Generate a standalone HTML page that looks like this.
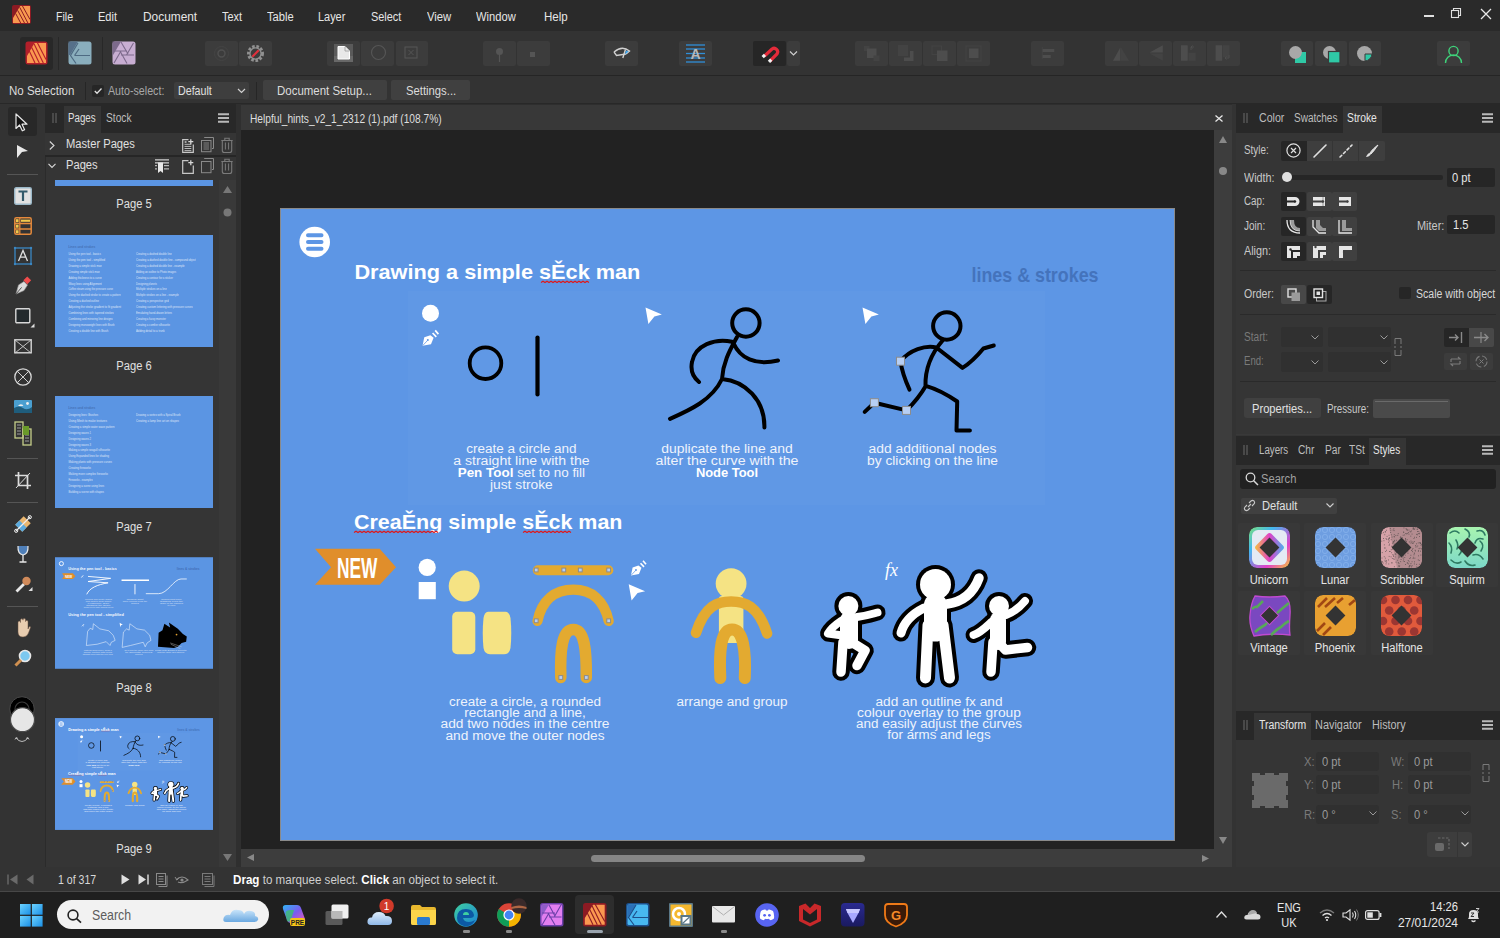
<!DOCTYPE html>
<html><head><meta charset="utf-8">
<style>
*{margin:0;padding:0;box-sizing:border-box}
html,body{width:1500px;height:938px;overflow:hidden;background:#333;font-family:"Liberation Sans",sans-serif;color:#ddd}
.a{position:absolute}
.t{position:absolute;white-space:nowrap;line-height:1}
svg{position:absolute;overflow:visible}
</style></head><body>
<div class="a" style="left:0px;top:0px;width:1500px;height:31px;background:#2a2a2a;"></div>
<div class="a" style="left:0px;top:31px;width:1500px;height:44px;background:#333333;"></div>
<div class="a" style="left:0px;top:75px;width:1500px;height:1px;background:#252525;"></div>
<div class="a" style="left:0px;top:76px;width:1500px;height:27px;background:#333333;"></div>
<div class="a" style="left:0px;top:103px;width:1500px;height:1px;background:#282828;"></div>
<div class="a" style="left:0px;top:104px;width:1500px;height:763px;background:#2e2e2e;"></div>
<div class="a" style="left:0px;top:104px;width:45px;height:763px;background:#333333;"></div>
<div class="a" style="left:45px;top:104px;width:191px;height:763px;background:#353535;"></div>
<div class="a" style="left:241px;top:105px;width:991px;height:25px;background:#383838;"></div>
<div class="a" style="left:241px;top:130px;width:973px;height:719px;background:#222222;"></div>
<div class="a" style="left:1214px;top:130px;width:18px;height:737px;background:#3d3d3d;"></div>
<div class="a" style="left:241px;top:849px;width:973px;height:18px;background:#3d3d3d;"></div>
<div class="a" style="left:1236px;top:104px;width:264px;height:763px;background:#353535;"></div>
<div class="a" style="left:0px;top:867px;width:1500px;height:24px;background:#333333;"></div>
<div class="a" style="left:0px;top:891px;width:1500px;height:1px;background:#474747;"></div>
<div class="a" style="left:0px;top:892px;width:1500px;height:46px;background:#1f1f1f;"></div>
<svg style="left:12px;top:5px;" width="19" height="19" viewBox="0 0 19 19"><rect x="0" y="0" width="19" height="19" rx="2" fill="#8c1a23"/>
<polygon points="8.2,1 18,1 18,18 1,18 1,13.1" fill="#f8984f"/>
<g stroke="#8c1a23" stroke-width="1" fill="none">
<line x1="3.6" y1="8.4" x2="8.7" y2="18"/><line x1="5.6" y1="5.3" x2="12.5" y2="18"/>
<line x1="7.7" y1="2.3" x2="15.9" y2="18"/><line x1="10.2" y1="0.5" x2="18" y2="14.5"/></g></svg>
<div class="t" style="left:55.7px;transform:scaleX(0.88);transform-origin:left;top:11px;font-size:12px;color:#e6e6e6;font-weight:400;">File</div>
<div class="t" style="left:98.3px;transform:scaleX(0.92);transform-origin:left;top:11px;font-size:12px;color:#e6e6e6;font-weight:400;">Edit</div>
<div class="t" style="left:142.7px;transform:scaleX(0.99);transform-origin:left;top:11px;font-size:12px;color:#e6e6e6;font-weight:400;">Document</div>
<div class="t" style="left:221.7px;transform:scaleX(0.91);transform-origin:left;top:11px;font-size:12px;color:#e6e6e6;font-weight:400;">Text</div>
<div class="t" style="left:266.7px;transform:scaleX(0.93);transform-origin:left;top:11px;font-size:12px;color:#e6e6e6;font-weight:400;">Table</div>
<div class="t" style="left:318.3px;transform:scaleX(0.91);transform-origin:left;top:11px;font-size:12px;color:#e6e6e6;font-weight:400;">Layer</div>
<div class="t" style="left:370.7px;transform:scaleX(0.91);transform-origin:left;top:11px;font-size:12px;color:#e6e6e6;font-weight:400;">Select</div>
<div class="t" style="left:426.7px;transform:scaleX(0.94);transform-origin:left;top:11px;font-size:12px;color:#e6e6e6;font-weight:400;">View</div>
<div class="t" style="left:476px;transform:scaleX(0.93);transform-origin:left;top:11px;font-size:12px;color:#e6e6e6;font-weight:400;">Window</div>
<div class="t" style="left:544px;transform:scaleX(0.96);transform-origin:left;top:11px;font-size:12px;color:#e6e6e6;font-weight:400;">Help</div>
<div class="a" style="left:1424px;top:15px;width:10px;height:2px;background:#e0e0e0;"></div>
<svg style="left:1451px;top:8px;" width="11" height="11" viewBox="0 0 11 11"><rect x="0.5" y="2.5" width="7" height="7" fill="none" stroke="#e0e0e0" stroke-width="1.1"/><path d="M2.5 2.5V0.5H9.5V7.5H7.5" fill="none" stroke="#e0e0e0" stroke-width="1.1"/></svg>
<svg style="left:1481px;top:9px;" width="10" height="10" viewBox="0 0 10 10"><path d="M0 0L10 10M10 0L0 10" stroke="#e8e8e8" stroke-width="1.3"/></svg>
<div class="a" style="left:20px;top:37px;width:33px;height:33px;background:#282828;border-radius:3px"></div>
<svg style="left:25px;top:41px;" width="23" height="24" viewBox="0 0 23 24"><rect x="0.5" y="0.5" width="22" height="23" rx="2.5" fill="#b21f2a"/>
<polygon points="9.5,2 21,2 21,22 2,22 2,15" fill="#fb9850"/>
<g stroke="#b21f2a" stroke-width="1.1"><line x1="4.3" y1="10" x2="10" y2="22"/><line x1="6.6" y1="6.3" x2="14.3" y2="22"/><line x1="9" y1="2.7" x2="18.3" y2="22"/><line x1="12" y1="1" x2="21" y2="18.5"/></g></svg>
<div class="a" style="left:58px;top:37px;width:1px;height:33px;background:#282828;"></div>
<svg style="left:68px;top:41px;" width="24" height="24" viewBox="0 0 24 24"><rect x="0.5" y="0.5" width="23" height="23" rx="2.5" fill="#8aaebd"/>
<polygon points="0.5,0.5 10,0.5 2,14 0.5,14" fill="#56708a"/>
<path d="M10,2 L2.5,14.5 L8,22.5 M6.5,14.5 L22,14.5 M6.5,14.5 L11,8" fill="none" stroke="#4e6a82" stroke-width="1.2"/></svg>
<div class="a" style="left:102px;top:37px;width:1px;height:33px;background:#282828;"></div>
<svg style="left:112px;top:41px;" width="24" height="24" viewBox="0 0 24 24"><rect x="0.5" y="0.5" width="23" height="23" rx="2.5" fill="#c8aed2"/>
<polygon points="0.5,0.5 9,0.5 0.5,15" fill="#7d6a8c"/>
<g fill="none" stroke="#7d6a8c" stroke-width="1.1"><path d="M9 1 L16 13 M21.5 2 L14.5 14 M22 14 L9 14 M15 22.5 L8 10 M2 22 L9 10 M2 10 L15 10"/></g></svg>
<div class="a" style="left:205px;top:41px;width:33px;height:25px;background:#3c3c3c;border-radius:2px"></div>
<div class="a" style="left:239px;top:41px;width:33px;height:25px;background:#3c3c3c;border-radius:2px"></div>
<div class="a" style="left:327px;top:41px;width:33px;height:25px;background:#3c3c3c;border-radius:2px"></div>
<div class="a" style="left:361px;top:41px;width:33px;height:25px;background:#3c3c3c;border-radius:2px"></div>
<div class="a" style="left:396px;top:41px;width:32px;height:25px;background:#3c3c3c;border-radius:2px"></div>
<div class="a" style="left:483px;top:41px;width:33px;height:25px;background:#3c3c3c;border-radius:2px"></div>
<div class="a" style="left:517px;top:41px;width:33px;height:25px;background:#3c3c3c;border-radius:2px"></div>
<div class="a" style="left:605px;top:41px;width:33px;height:25px;background:#3c3c3c;border-radius:2px"></div>
<div class="a" style="left:679px;top:41px;width:33px;height:25px;background:#3c3c3c;border-radius:2px"></div>
<div class="a" style="left:787px;top:41px;width:13px;height:25px;background:#3c3c3c;border-radius:2px"></div>
<div class="a" style="left:855px;top:41px;width:33px;height:25px;background:#3c3c3c;border-radius:2px"></div>
<div class="a" style="left:889px;top:41px;width:33px;height:25px;background:#3c3c3c;border-radius:2px"></div>
<div class="a" style="left:923px;top:41px;width:33px;height:25px;background:#3c3c3c;border-radius:2px"></div>
<div class="a" style="left:957px;top:41px;width:33px;height:25px;background:#3c3c3c;border-radius:2px"></div>
<div class="a" style="left:1031px;top:41px;width:33px;height:25px;background:#3c3c3c;border-radius:2px"></div>
<div class="a" style="left:1105px;top:41px;width:33px;height:25px;background:#3c3c3c;border-radius:2px"></div>
<div class="a" style="left:1139px;top:41px;width:33px;height:25px;background:#3c3c3c;border-radius:2px"></div>
<div class="a" style="left:1173px;top:41px;width:33px;height:25px;background:#3c3c3c;border-radius:2px"></div>
<div class="a" style="left:1207px;top:41px;width:33px;height:25px;background:#3c3c3c;border-radius:2px"></div>
<div class="a" style="left:1281px;top:41px;width:32px;height:25px;background:#3c3c3c;border-radius:2px"></div>
<div class="a" style="left:1315px;top:41px;width:32px;height:25px;background:#3c3c3c;border-radius:2px"></div>
<div class="a" style="left:1349px;top:41px;width:32px;height:25px;background:#3c3c3c;border-radius:2px"></div>
<div class="a" style="left:1437px;top:41px;width:33px;height:25px;background:#3c3c3c;border-radius:2px"></div>
<div class="a" style="left:753px;top:41px;width:33px;height:25px;background:#262626;border-radius:2px"></div>
<svg style="left:213px;top:45px;" width="17" height="17" viewBox="0 0 17 17"><circle cx="8.5" cy="8.5" r="3.5" fill="none" stroke="#505050" stroke-width="1.4"/><circle cx="8.5" cy="8.5" r="7" fill="none" stroke="#444" stroke-width="1"/></svg>
<svg style="left:246px;top:44px;" width="19" height="19" viewBox="0 0 19 19"><circle cx="9.5" cy="9.5" r="7" fill="none" stroke="#909090" stroke-width="3" stroke-dasharray="2.6 1.6"/><circle cx="9.5" cy="9.5" r="5.6" fill="none" stroke="#909090" stroke-width="1.4"/><line x1="6.3" y1="12.7" x2="12.7" y2="6.3" stroke="#e0303c" stroke-width="2.2"/></svg>
<svg style="left:334px;top:44px;" width="19" height="19" viewBox="0 0 19 19"><rect x="0" y="0" width="19" height="18" fill="#5a5a5a"/><g stroke="#8a8a8a" stroke-width="0.6"><line x1="0" y1="13" x2="19" y2="13"/><line x1="0" y1="15" x2="19" y2="15"/><line x1="0" y1="17" x2="19" y2="17"/></g><path d="M4 2.5H11L15.5 7V15H4Z" fill="#e8e8e8" stroke="#fff" stroke-width="1"/><path d="M11 2.5V7H15.5" fill="none" stroke="#999" stroke-width="0.8"/></svg>
<svg style="left:370px;top:44px;" width="17" height="17" viewBox="0 0 17 17"><circle cx="8.5" cy="8.5" r="7" fill="none" stroke="#555" stroke-width="1.2"/></svg>
<svg style="left:404px;top:46px;" width="14" height="13" viewBox="0 0 14 13"><rect x="1" y="1" width="12" height="11" fill="none" stroke="#555" stroke-width="1.1"/><path d="M4.5 4L9.5 9M9.5 4L4.5 9" stroke="#555" stroke-width="1"/></svg>
<svg style="left:492px;top:46px;" width="16" height="18" viewBox="0 0 16 18"><circle cx="7.5" cy="5.5" r="3.5" fill="#555"/><line x1="7.5" y1="8" x2="7.5" y2="16" stroke="#555" stroke-width="1.2"/></svg>
<svg style="left:526px;top:49px;" width="14" height="10" viewBox="0 0 14 10"><rect x="4" y="3" width="5" height="5" fill="#555"/></svg>
<svg style="left:613px;top:46px;" width="18" height="14" viewBox="0 0 18 14"><path d="M1 6 Q9 -1 16.5 5 L13 8" fill="none" stroke="#d0d0d0" stroke-width="1.4"/><path d="M1 6 L3.5 9.5 L13 8" fill="none" stroke="#d0d0d0" stroke-width="1.3"/><line x1="12.5" y1="3.5" x2="9.8" y2="12" stroke="#d0d0d0" stroke-width="1.4"/><path d="M13 4.5 L15.6 5.5 L12 8.5Z" fill="#3ba7f0"/></svg>
<svg style="left:686px;top:44px;" width="19" height="19" viewBox="0 0 19 19"><g stroke="#2f8fd8" stroke-width="1.3"><line x1="0" y1="1" x2="19" y2="1"/><line x1="0" y1="5" x2="19" y2="5"/><line x1="0" y1="9.5" x2="19" y2="9.5"/><line x1="0" y1="14" x2="19" y2="14"/><line x1="0" y1="18" x2="19" y2="18"/></g><text x="9.5" y="15" text-anchor="middle" font-family="Liberation Sans" font-weight="bold" font-size="14" fill="#b8b8b8">A</text></svg>
<svg style="left:761px;top:45px;" width="18" height="17" viewBox="0 0 18 17"><path d="M3.5 11 L11 4 A3.6 3.6 0 0 1 16 9 L9 16" fill="none" stroke="#e52b3a" stroke-width="3.2"/><rect x="1.2" y="9.5" width="3.2" height="3.2" transform="rotate(45 2.8 11.1)" fill="#f2f2f2"/><rect x="7.5" y="14.2" width="3.2" height="3.2" transform="rotate(45 9.1 15.8)" fill="#f2f2f2"/></svg>
<svg style="left:789px;top:50px;" width="9" height="6" viewBox="0 0 9 6"><path d="M1 1.5L4.5 5L8 1.5" fill="none" stroke="#cfcfcf" stroke-width="1.2"/></svg>
<svg style="left:855px;top:38px;" width="140" height="30" viewBox="0 0 140 30"><rect x="9" y="8" width="5.5" height="5" fill="#434343"/><rect x="12" y="10.5" width="9.5" height="9.5" fill="#4d4d4d"/><rect x="18.5" y="17.5" width="6" height="5.5" fill="#434343"/><rect x="43" y="7" width="10" height="11" fill="#434343"/><path d="M55 13 H58.5 V23 H49 V19.5 H55Z" fill="#4d4d4d"/><rect x="77" y="8" width="9.5" height="8.5" fill="none" stroke="#434343" stroke-width="1"/><rect x="82" y="12.5" width="10.5" height="10.5" fill="#4d4d4d"/><rect x="111" y="8" width="15" height="15" fill="none" stroke="#434343" stroke-width="1"/><rect x="114" y="10.5" width="9.5" height="9.5" fill="#4d4d4d"/></svg>
<svg style="left:1025px;top:38px;" width="220" height="30" viewBox="0 0 220 30"><path d="M17.3 9V21" stroke="#434343" stroke-width="1"/><rect x="17.6" y="11" width="11.7" height="3" fill="#4d4d4d"/><rect x="17.6" y="17" width="8.1" height="3" fill="#4d4d4d"/><path d="M95.3 9.5 L95.3 22.7 L88 22.7Z" fill="#4d4d4d"/><path d="M96 9.5 L96 22.7 L104 22.7Z" fill="#434343"/><path d="M137.8 7.3 L137.8 14.5 L124.6 14.5Z" fill="#4d4d4d"/><path d="M137.8 15.5 L124.6 15.5 L137.8 22.7Z" fill="#434343"/><rect x="156" y="7.3" width="6.7" height="15.4" fill="#4d4d4d"/><rect x="163.5" y="14.7" width="7.3" height="8" fill="#434343"/><path d="M166 12 V9 H169 M167.5 7.5 L166 9 L167.5 10.5" fill="none" stroke="#4d4d4d" stroke-width="1"/><rect x="190.6" y="7.3" width="6.6" height="15.4" fill="#4d4d4d"/><rect x="198" y="7.3" width="6.5" height="12" fill="#434343"/><path d="M204 17 V20 H200 M201.5 18.5 L200 20 L201.5 21.5" fill="none" stroke="#4d4d4d" stroke-width="1"/></svg>
<svg style="left:1288px;top:45px;" width="19" height="19" viewBox="0 0 19 19"><rect x="7" y="7" width="11" height="11" fill="#2fc9a6"/><circle cx="7.5" cy="7.5" r="6.5" fill="#a8a8a8"/><path d="M14 7.5 A6.5 6.5 0 0 1 7 14 L7 18 L18 18 L18 7 Z" fill="#2fc9a6"/></svg>
<svg style="left:1322px;top:45px;" width="19" height="19" viewBox="0 0 19 19"><circle cx="7.5" cy="7.5" r="6.5" fill="#a8a8a8"/><rect x="6.5" y="6.5" width="11.5" height="11.5" fill="#2fc9a6" stroke="#3a3a3a" stroke-width="1.2"/></svg>
<svg style="left:1356px;top:45px;" width="19" height="19" viewBox="0 0 19 19"><circle cx="8.5" cy="8.5" r="7.5" fill="#a8a8a8"/><path d="M9 9 H16 A7.5 7.5 0 0 1 9 16Z" fill="#2fc9a6" stroke="#3a3a3a" stroke-width="1"/></svg>
<svg style="left:1444px;top:45px;" width="19" height="19" viewBox="0 0 19 19"><circle cx="9.5" cy="6" r="4.6" fill="none" stroke="#3fd27a" stroke-width="1.4"/><path d="M1.5 18 A8 8 0 0 1 17.5 18" fill="none" stroke="#3fd27a" stroke-width="1.4"/></svg>
<div class="t" style="left:9px;transform:scaleX(0.96);transform-origin:left;top:85px;font-size:12px;color:#dcdcdc;font-weight:400;">No Selection</div>
<div class="a" style="left:85px;top:82px;width:1px;height:18px;background:#262626;"></div>
<div class="a" style="left:92px;top:85px;width:12px;height:12px;background:#262626;border-radius:2px"></div>
<svg style="left:93px;top:86px;" width="10" height="10" viewBox="0 0 10 10"><path d="M1.8 5 L4 7.3 L8.5 2.5" fill="none" stroke="#e0e0e0" stroke-width="1.3"/></svg>
<div class="t" style="left:108.3px;transform:scaleX(0.89);transform-origin:left;top:85px;font-size:12px;color:#a8a8a8;font-weight:400;">Auto-select:</div>
<div class="a" style="left:174px;top:82px;width:75px;height:17px;background:#3e3e3e;border-radius:2px"></div>
<div class="t" style="left:177.7px;transform:scaleX(0.89);transform-origin:left;top:85px;font-size:12px;color:#e0e0e0;font-weight:400;">Default</div>
<svg style="left:237px;top:88px;" width="9" height="6" viewBox="0 0 9 6"><path d="M1 1L4.5 4.5L8 1" fill="none" stroke="#d0d0d0" stroke-width="1.2"/></svg>
<div class="a" style="left:256px;top:82px;width:1px;height:18px;background:#262626;"></div>
<div class="a" style="left:263px;top:80px;width:124px;height:20px;background:#404040;border-radius:2px"></div>
<div class="t" style="left:277px;transform:scaleX(0.955);transform-origin:left;top:85px;font-size:12px;color:#dcdcdc;font-weight:400;">Document Setup...</div>
<div class="a" style="left:391px;top:80px;width:79px;height:20px;background:#404040;border-radius:2px"></div>
<div class="t" style="left:405.7px;transform:scaleX(0.94);transform-origin:left;top:85px;font-size:12px;color:#dcdcdc;font-weight:400;">Settings...</div>
<div class="a" style="left:45px;top:104px;width:1px;height:763px;background:#2b2b2b;"></div>
<div class="a" style="left:8px;top:107px;width:29px;height:29px;background:#282828;border-radius:3px"></div>
<svg style="left:14px;top:113px;" width="16" height="19" viewBox="0 0 16 19"><path d="M2 1 L2 15.5 L5.6 12 L8.3 17.8 L10.6 16.8 L8 11.2 L13 11.2 Z" fill="#141414" stroke="#e8e8e8" stroke-width="1.2" stroke-linejoin="round"/></svg>
<svg style="left:16px;top:144px;" width="13" height="14" viewBox="0 0 13 14"><path d="M1 1 L12 7 L6 8 L1 14 Z" fill="#e8e8e8"/></svg>
<div class="a" style="left:7px;top:174px;width:31px;height:1px;background:#555555;"></div>
<svg style="left:14px;top:187px;" width="18" height="18" viewBox="0 0 18 18"><rect x="0.7" y="0.7" width="16.6" height="16.6" rx="1.5" fill="#e2e2e2" stroke="#9bb8c8" stroke-width="1.4"/><path d="M4.5 4.5H13.5M9 4.5V14" stroke="#335a6a" stroke-width="2.2"/></svg>
<svg style="left:14px;top:217px;" width="18" height="18" viewBox="0 0 18 18"><rect x="0.8" y="0.8" width="16.4" height="16.4" rx="1.5" fill="none" stroke="#e58a3c" stroke-width="1.5"/><path d="M0.8 6.5H17.2M0.8 12H17.2M5.8 0.8V17.2" stroke="#e58a3c" stroke-width="1.3"/><rect x="2" y="2.2" width="2.6" height="3" fill="#f2c94c"/><rect x="7" y="2.6" width="9" height="2.2" fill="#f2c94c"/><rect x="2" y="7.7" width="2.6" height="3" fill="#f2c94c"/><rect x="2" y="13.2" width="2.6" height="3" fill="#f2c94c"/></svg>
<svg style="left:14px;top:247px;" width="18" height="18" viewBox="0 0 18 18"><rect x="1" y="1" width="16" height="16" fill="none" stroke="#3b88c4" stroke-width="1.3"/><circle cx="1" cy="1" r="1.2" fill="#3b88c4"/><circle cx="17" cy="1" r="1.2" fill="#3b88c4"/><circle cx="1" cy="17" r="1.2" fill="#3b88c4"/><circle cx="17" cy="17" r="1.2" fill="#3b88c4"/><path d="M4.5 14 L9 3.5 L13.5 14 M6.2 10.2H11.8" fill="none" stroke="#e0e0e0" stroke-width="1.3"/></svg>
<svg style="left:14px;top:277px;" width="18" height="18" viewBox="0 0 18 18"><path d="M2 17 L4.5 8 L10 4.5 L13.5 8 L10 13.5 Z" fill="#dcdcdc" stroke="#9a9a9a" stroke-width="0.6"/><line x1="2" y1="17" x2="7.6" y2="10.4" stroke="#555" stroke-width="1"/><rect x="10.5" y="0.6" width="5.5" height="5.5" transform="rotate(45 13.25 3.35)" fill="#f04c4c"/></svg>
<svg style="left:15px;top:308px;" width="20" height="20" viewBox="0 0 20 20"><rect x="0.8" y="0.8" width="14" height="14" rx="1" fill="#22292c" stroke="#d8d8d8" stroke-width="1.4"/><path d="M15.5 19.5 L19.5 15.5 L19.5 19.5Z" fill="#e0e0e0"/></svg>
<svg style="left:14px;top:339px;" width="18" height="15" viewBox="0 0 18 15"><rect x="0.8" y="0.8" width="16.4" height="13" fill="none" stroke="#d8d8d8" stroke-width="1.4"/><path d="M1 1L17 14M17 1L1 14" stroke="#cfcfcf" stroke-width="0.9"/></svg>
<svg style="left:14px;top:368px;" width="18" height="18" viewBox="0 0 18 18"><circle cx="9" cy="9" r="8.2" fill="none" stroke="#d8d8d8" stroke-width="1.3"/><path d="M3.2 3.2L14.8 14.8M14.8 3.2L3.2 14.8" stroke="#d0d0d0" stroke-width="1"/></svg>
<svg style="left:14px;top:400px;" width="18" height="13" viewBox="0 0 18 13"><rect x="0" y="0" width="18" height="13" rx="1" fill="#4a9fd0"/><path d="M0 8 Q5 5 9 8 T18 7 V13 H0Z" fill="#1f5d7c"/><circle cx="13.5" cy="3.5" r="1.4" fill="#eee"/><path d="M4 6 Q6 3 9 5 Q10 6 8 6Z" fill="#eee"/></svg>
<svg style="left:14px;top:421px;" width="18" height="25" viewBox="0 0 18 25"><rect x="1" y="1" width="8" height="16" fill="none" stroke="#c6cf8a" stroke-width="1.3"/><rect x="9" y="8" width="8" height="16" fill="none" stroke="#c6cf8a" stroke-width="1.3"/><path d="M3 4H7M3 7H7M3 10H7M3 13H7M11 14H15M11 17H15M11 20H15" stroke="#aaa" stroke-width="0.9"/><path d="M9 5 L15 5 L9 14Z M9 14 L15 5 L15 14Z" fill="#6a9a2a"/></svg>
<div class="a" style="left:7px;top:458px;width:31px;height:1px;background:#555555;"></div>
<svg style="left:15px;top:472px;" width="16" height="17" viewBox="0 0 16 17"><path d="M3.5 0 V13.5 H16 M0 3.5 H12.5 V17" fill="none" stroke="#dcdcdc" stroke-width="1.7"/><line x1="1" y1="16" x2="15" y2="1" stroke="#dcdcdc" stroke-width="1"/></svg>
<div class="a" style="left:7px;top:502px;width:31px;height:1px;background:#555555;"></div>
<svg style="left:14px;top:515px;" width="18" height="18" viewBox="0 0 18 18"><rect x="3" y="4" width="12" height="10" transform="rotate(-45 9 9)" fill="#eab770"/><rect x="3" y="4" width="6" height="10" transform="rotate(-45 9 9)" fill="#5aaadf"/><line x1="2" y1="16" x2="16" y2="2" stroke="#eee" stroke-width="1.3"/><circle cx="2.2" cy="15.8" r="1.6" fill="none" stroke="#eee" stroke-width="1"/><circle cx="15.8" cy="2.2" r="1.6" fill="none" stroke="#eee" stroke-width="1"/></svg>
<svg style="left:17px;top:545px;" width="12" height="18" viewBox="0 0 12 18"><path d="M1 1 Q0.5 9 6 10 Q11.5 9 11 1" fill="#4f7fb8" stroke="#e8e8e8" stroke-width="1.2"/><path d="M6 10V17M2.5 17H9.5" stroke="#e8e8e8" stroke-width="1.3"/></svg>
<svg style="left:14px;top:575px;" width="19" height="19" viewBox="0 0 19 19"><line x1="2.5" y1="16.5" x2="10" y2="9" stroke="#e8e8e8" stroke-width="2.8"/><circle cx="12.5" cy="6" r="4.2" fill="#d08a5a"/><path d="M14.5 16 L18.5 12 L18.5 16Z" fill="#e0e0e0"/></svg>
<div class="a" style="left:7px;top:606px;width:31px;height:1px;background:#555555;"></div>
<svg style="left:15px;top:618px;" width="16" height="20" viewBox="0 0 16 20"><path d="M3 10 V4.5 Q3 3 4.3 3 Q5.5 3 5.5 4.5 V2.2 Q5.5 0.8 6.8 0.8 Q8 0.8 8 2.2 V1.8 Q8 0.6 9.3 0.6 Q10.5 0.6 10.5 1.8 V3.6 Q10.5 2.5 11.8 2.5 Q13 2.5 13 3.6 V11 L14.2 8.8 Q15.3 7.8 15.6 9.2 L13.5 15 Q12 19 8 19 Q3 19 3 14 Z" fill="#e8cdb0" stroke="#6a5040" stroke-width="0.5"/></svg>
<svg style="left:14px;top:649px;" width="18" height="18" viewBox="0 0 18 18"><circle cx="11" cy="7" r="5.5" fill="#7cc8f0" stroke="#e8e8e8" stroke-width="1.6"/><line x1="7" y1="11" x2="1.5" y2="16.5" stroke="#d09050" stroke-width="3"/></svg>
<svg style="left:9px;top:696px;" width="27" height="37" viewBox="0 0 27 37"><circle cx="13" cy="13" r="12.3" fill="#000" stroke="#4a4a4a" stroke-width="1"/><circle cx="13" cy="13" r="7" fill="none" stroke="#3a3a3a" stroke-width="1.2"/><circle cx="13.5" cy="23.7" r="12" fill="#e6e6e6" stroke="#4a4a4a" stroke-width="1.2"/></svg>
<svg style="left:15px;top:737px;" width="14" height="7" viewBox="0 0 14 7"><path d="M1 1 Q7 8 13 1" fill="none" stroke="#bbb" stroke-width="1"/><path d="M0 2.5L1 0.5L3 1.5M11 1.5L13 0.5L14 2.5" fill="none" stroke="#bbb" stroke-width="0.9"/></svg>
<div class="a" style="left:45px;top:104px;width:191px;height:29px;background:#282828;"></div>
<div class="a" style="left:64px;top:106px;width:37px;height:27px;background:#353535;"></div>
<svg style="left:52px;top:113px;" width="5" height="10" viewBox="0 0 5 10"><path d="M1 0V10M4 0V10" stroke="#6a6a6a" stroke-width="1"/></svg>
<div class="t" style="left:68px;transform:scaleX(0.81);transform-origin:left;top:112px;font-size:12px;color:#e0e0e0;font-weight:400;">Pages</div>
<div class="t" style="left:105.6px;transform:scaleX(0.85);transform-origin:left;top:112px;font-size:12px;color:#bdbdbd;font-weight:400;">Stock</div>
<svg style="left:218px;top:113px;" width="11" height="10" viewBox="0 0 11 10"><path d="M0 1.2H11M0 5H11M0 8.8H11" stroke="#b8b8b8" stroke-width="2"/></svg>
<div class="a" style="left:45px;top:133px;width:191px;height:22px;background:#353535;"></div>
<div class="a" style="left:45px;top:155px;width:191px;height:2px;background:#262626;"></div>
<svg style="left:49px;top:141px;" width="6" height="9" viewBox="0 0 6 9"><path d="M0.8 0.5L5 4.5L0.8 8.5" fill="none" stroke="#d8d8d8" stroke-width="1.1"/></svg>
<div class="t" style="left:66px;transform:scaleX(0.93);transform-origin:left;top:138px;font-size:12px;color:#e0e0e0;font-weight:400;">Master Pages</div>
<svg style="left:182px;top:138.5px;" width="12" height="15" viewBox="0 0 12 15"><path d="M6.5 0.7H0.7V13.3H11.3V5.5" fill="none" stroke="#c8c8c8" stroke-width="1.2"/><path d="M2.5 5.3H9.3M2.5 7.4H9.3M2.5 9.5H9.3M2.5 11.6H9.3" stroke="#c8c8c8" stroke-width="0.9"/><ellipse cx="3.6" cy="3" rx="1.2" ry="0.8" fill="#d8d8d8"/><path d="M8.8 0.2V5.2M6.3 2.7H11.3" stroke="#d8d8d8" stroke-width="1.3"/></svg>
<svg style="left:201px;top:137px;" width="13" height="15" viewBox="0 0 13 15"><path d="M3.2 0.5H12.5V11.5H11" fill="none" stroke="#8a8a8a" stroke-width="1"/><rect x="0.5" y="3.5" width="9.5" height="11.2" fill="none" stroke="#8a8a8a" stroke-width="1"/><path d="M2.5 6H8M2.5 8H8M2.5 10H8M2.5 12H8" stroke="#8a8a8a" stroke-width="0.9"/></svg>
<svg style="left:221px;top:137px;" width="12" height="16" viewBox="0 0 12 16"><path d="M0.3 3.5H11.7M3.8 3V1.2H8.2V3" fill="none" stroke="#7a7a7a" stroke-width="1.1"/><path d="M1.3 3.8V13.5Q1.3 15.5 3.3 15.5H8.7Q10.7 15.5 10.7 13.5V3.8" fill="none" stroke="#7a7a7a" stroke-width="1.1"/><path d="M4.4 5.5V12.5M7.6 5.5V12.5" stroke="#7a7a7a" stroke-width="1"/></svg>
<svg style="left:48px;top:163px;" width="8" height="6" viewBox="0 0 8 6"><path d="M0.5 0.8L4 4.5L7.5 0.8" fill="none" stroke="#d8d8d8" stroke-width="1.1"/></svg>
<div class="t" style="left:66px;transform:scaleX(0.93);transform-origin:left;top:159px;font-size:12px;color:#e0e0e0;font-weight:400;">Pages</div>
<svg style="left:155px;top:159px;" width="15" height="15" viewBox="0 0 15 15"><path d="M0 0.8H14M0 3.8H14" stroke="#d0d0d0" stroke-width="1.2"/><path d="M0 6.7H2M0 9.8H2M9 6.7H14M9 9.8H14" stroke="#b8b8b8" stroke-width="1.2"/><path d="M3 3.5H8V14L5.5 12L3 14Z" fill="#e8e8e8"/></svg>
<svg style="left:182px;top:159.7px;" width="12" height="15" viewBox="0 0 12 15"><path d="M6.5 0.7H0.7V13.3H11.3V5.5" fill="none" stroke="#c8c8c8" stroke-width="1.2"/><path d="M8.8 0.2V5.2M6.3 2.7H11.3" stroke="#d8d8d8" stroke-width="1.3"/></svg>
<svg style="left:201px;top:158.3px;" width="13" height="15" viewBox="0 0 13 15"><path d="M3.2 0.5H12.5V11.5H11" fill="none" stroke="#8a8a8a" stroke-width="1"/><rect x="0.5" y="3.5" width="9.5" height="11.2" fill="none" stroke="#8a8a8a" stroke-width="1"/></svg>
<svg style="left:221px;top:158.3px;" width="12" height="16" viewBox="0 0 12 16"><path d="M0.3 3.5H11.7M3.8 3V1.2H8.2V3" fill="none" stroke="#7a7a7a" stroke-width="1.1"/><path d="M1.3 3.8V13.5Q1.3 15.5 3.3 15.5H8.7Q10.7 15.5 10.7 13.5V3.8" fill="none" stroke="#7a7a7a" stroke-width="1.1"/><path d="M4.4 5.5V12.5M7.6 5.5V12.5" stroke="#7a7a7a" stroke-width="1"/></svg>
<div class="a" style="left:219px;top:180px;width:17px;height:687px;background:#393939;"></div>
<svg style="left:223px;top:186px;" width="9" height="7" viewBox="0 0 9 7"><path d="M4.5 0L9 7H0Z" fill="#777"/></svg>
<svg style="left:223px;top:208px;" width="9" height="9" viewBox="0 0 9 9"><circle cx="4.5" cy="4.5" r="4" fill="#777"/></svg>
<svg style="left:223px;top:854px;" width="9" height="7" viewBox="0 0 9 7"><path d="M4.5 7L9 0H0Z" fill="#777"/></svg>
<div class="a" style="left:236px;top:104px;width:5px;height:763px;background:#2f2f2f;"></div>
<div class="t" style="left:250px;transform:scaleX(0.85);transform-origin:left;top:113px;font-size:12px;color:#dedede;font-weight:400;">Helpful_hints_v2_1_2312 (1).pdf (108.7%)</div>
<svg style="left:1215px;top:115px;" width="8" height="7" viewBox="0 0 8 7"><path d="M0.5 0.5L7.5 6.5M7.5 0.5L0.5 6.5" stroke="#e8e8e8" stroke-width="1.3"/></svg>
<div class="a" style="left:1232px;top:104px;width:4px;height:763px;background:#333333;"></div>
<svg style="left:1219px;top:136px;" width="8" height="7" viewBox="0 0 8 7"><path d="M4 0L8 7H0Z" fill="#888"/></svg>
<svg style="left:1219px;top:167px;" width="8" height="8" viewBox="0 0 8 8"><circle cx="4" cy="4" r="4" fill="#888"/></svg>
<svg style="left:1219px;top:837px;" width="8" height="7" viewBox="0 0 8 7"><path d="M4 7L8 0H0Z" fill="#888"/></svg>
<svg style="left:247px;top:854px;" width="7" height="7" viewBox="0 0 7 7"><path d="M0 3.5L7 0V7Z" fill="#888"/></svg>
<svg style="left:1202px;top:855px;" width="7" height="7" viewBox="0 0 7 7"><path d="M7 3.5L0 0V7Z" fill="#888"/></svg>
<div class="a" style="left:591px;top:855px;width:274px;height:7px;background:#858585;border-radius:3.5px"></div>
<svg width="0" height="0" style="position:absolute"><defs><g id="pgc" font-family="Liberation Sans"><rect x="280" y="208" width="894" height="633" fill="#5d96e5"/><rect x="408" y="291" width="637" height="214" fill="#ffffff" opacity="0.025"/><circle cx="314.7" cy="242" r="15.3" fill="#fff"/><path d="M308,235.2H321.5M308,242H321.5M308,248.8H321.5" stroke="#5d96e5" stroke-width="4" stroke-linecap="round"/><text x="354.4" y="278.6" font-size="20.5" font-weight="bold" fill="#fff" textLength="286" lengthAdjust="spacingAndGlyphs">Drawing a simple sĚck man</text><path d="M541,282.5 L543,281.3 L545,282.5 L547,281.3 L549,282.5 L551,281.3 L553,282.5 L555,281.3 L557,282.5 L559,281.3 L561,282.5 L563,281.3 L565,282.5 L567,281.3 L569,282.5 L571,281.3 L573,282.5 L575,281.3 L577,282.5 L579,281.3 L581,282.5 L583,281.3 L585,282.5 L587,281.3 L589,282.5" fill="none" stroke="#e01818" stroke-width="1.2"/><text x="971.5" y="281.5" font-size="20.5" font-weight="bold" fill="#4473bc" textLength="127" lengthAdjust="spacingAndGlyphs">lines &amp; strokes</text><text x="354" y="528.7" font-size="20.5" font-weight="bold" fill="#fff" textLength="268.5" lengthAdjust="spacingAndGlyphs">CreaĚng simple sĚck man</text><path d="M354,532.5 L356,531.3 L358,532.5 L360,531.3 L362,532.5 L364,531.3 L366,532.5 L368,531.3 L370,532.5 L372,531.3 L374,532.5 L376,531.3 L378,532.5 L380,531.3 L382,532.5 L384,531.3 L386,532.5 L388,531.3 L390,532.5 L392,531.3 L394,532.5 L396,531.3 L398,532.5 L400,531.3 L402,532.5 L404,531.3 L406,532.5 L408,531.3 L410,532.5 L412,531.3 L414,532.5 L416,531.3 L418,532.5 L420,531.3 L422,532.5 L424,531.3 L426,532.5 L428,531.3 L430,532.5 L432,531.3 L434,532.5 L436,531.3 L438,532.5" fill="none" stroke="#e01818" stroke-width="1.2"/><path d="M523,532.5 L525,531.3 L527,532.5 L529,531.3 L531,532.5 L533,531.3 L535,532.5 L537,531.3 L539,532.5 L541,531.3 L543,532.5 L545,531.3 L547,532.5 L549,531.3 L551,532.5 L553,531.3 L555,532.5 L557,531.3 L559,532.5 L561,531.3 L563,532.5 L565,531.3 L567,532.5 L569,531.3 L571,532.5" fill="none" stroke="#e01818" stroke-width="1.2"/><circle cx="430.5" cy="313.2" r="8.5" fill="#fff"/><g transform="translate(421,329) scale(1.0)"><path d="M1.5,16.8 L3.3,8.3 L9.4,6.2 L12.6,8.8 L10,15.2Z" fill="#fff"/><path d="M1.8,16.5 L6.5,11.5" stroke="#5d96e5" stroke-width="0.8"/><circle cx="6.8" cy="11" r="1" fill="#5d96e5"/><path d="M11.6,4 L15.3,7.8 M14.2,1.4 L17.4,5.1" stroke="#fff" stroke-width="1.7"/></g><circle cx="485.5" cy="363.2" r="15.8" fill="none" stroke="#000" stroke-width="3.8"/><path d="M537.5,337.5 V394.5" stroke="#000" stroke-width="4.2" stroke-linecap="round"/><g transform="translate(645.5,307.5) scale(1.0)"><path d="M0,0 L16.4,7.1 L8.9,8.9 L2.9,16.4Z" fill="#fff"/></g><g transform="translate(862.5,307.5) scale(1.0)"><path d="M0,0 L16.4,7.1 L8.9,8.9 L2.9,16.4Z" fill="#fff"/></g><circle cx="745.9" cy="323" r="13.7" fill="none" stroke="#000" stroke-width="4" stroke-linecap="round" stroke-linejoin="round"/><path d="M737,337 C730,350 723,362 722,379 M732,341.7 C715,338 695,345 692,362 C690,372 694,378 699,382 M733.4,343 C740,358 755,366 778,360.5 M722,379 C745,381 765,400 764.4,427.4 M722,379 C712,400 690,410 670,418.8" fill="none" stroke="#000" stroke-width="4" stroke-linecap="round" stroke-linejoin="round"/><circle cx="946.8" cy="326" r="13.7" fill="none" stroke="#000" stroke-width="4" stroke-linecap="round" stroke-linejoin="round"/><path d="M943,340 C930,355 925,370 925.5,386 M936.3,347.5 C925,345 910,350 900.5,361.2 C902,372 906,382 909.5,389.6 M936.3,347.5 L962.5,367.9 C972,362 978,355 983.4,348.5 L993.8,345.5 M925.9,385.8 C920,396 913,404 906.5,410.4 L874.4,402.7 L864.7,411.9 M925.9,385.8 C940,390 948,395 957.2,401.5 L956.5,430.6 L969.9,430.6" fill="none" stroke="#000" stroke-width="4" stroke-linecap="round" stroke-linejoin="round"/><rect x="896.5" y="357.2" width="8" height="8" fill="#b7cff4" stroke="#8c8c8c" stroke-width="1"/><rect x="870.4" y="398.7" width="8" height="8" fill="#b7cff4" stroke="#8c8c8c" stroke-width="1"/><rect x="902.5" y="406.4" width="8" height="8" fill="#b7cff4" stroke="#8c8c8c" stroke-width="1"/><text x="521.4" y="453.0" text-anchor="middle" font-size="13.7" fill="#eef3fc" textLength="110.4" lengthAdjust="spacingAndGlyphs">create a circle and</text><text x="521.4" y="465.1" text-anchor="middle" font-size="13.7" fill="#eef3fc" textLength="136.4" lengthAdjust="spacingAndGlyphs">a straight line with the</text><text x="521.4" y="477.2" text-anchor="middle" font-size="13.7" fill="#eef3fc" textLength="127.4" lengthAdjust="spacingAndGlyphs"><tspan font-weight="bold" fill="#fff">Pen Tool</tspan> set to no fill</text><text x="521.4" y="489.3" text-anchor="middle" font-size="13.7" fill="#eef3fc" textLength="62.8" lengthAdjust="spacingAndGlyphs">just stroke</text><text x="727" y="453.0" text-anchor="middle" font-size="13.7" fill="#eef3fc" textLength="131.5" lengthAdjust="spacingAndGlyphs">duplicate the line and</text><text x="727" y="465.1" text-anchor="middle" font-size="13.7" fill="#eef3fc" textLength="143" lengthAdjust="spacingAndGlyphs">alter the curve with the</text><text x="727" y="477.2" text-anchor="middle" font-size="13.7" font-weight="bold" fill="#fff" textLength="62.2" lengthAdjust="spacingAndGlyphs">Node Tool</text><text x="932.5" y="453.0" text-anchor="middle" font-size="13.7" fill="#eef3fc" textLength="128" lengthAdjust="spacingAndGlyphs">add additional nodes</text><text x="932.5" y="465.1" text-anchor="middle" font-size="13.7" fill="#eef3fc" textLength="131" lengthAdjust="spacingAndGlyphs">by clicking on the line</text><polygon points="315,548.7 379.7,548.7 396,567.3 379.7,584.7 315,584.7 331,567.3" fill="#e08e2b"/><text x="336.9" y="578.1" font-size="29.5" font-weight="bold" fill="#fff" textLength="40.4" lengthAdjust="spacingAndGlyphs">NEW</text><circle cx="427.2" cy="567.4" r="8.6" fill="#fff"/><rect x="418.7" y="582" width="17.1" height="17.2" fill="#fff"/><circle cx="464.2" cy="586.1" r="15.5" fill="#f5e384"/><rect x="452.2" y="611.7" width="23.1" height="42.5" rx="5" fill="#f5e384"/><path d="M488,611.7 H505.5 Q509.5,612 510.5,618 Q512,633 510.5,648 Q509.5,654.2 504,654.2 H490 Q484.5,654 483.5,648 Q482,633 483.5,618 Q484.5,612 488,611.7Z" fill="#f5e384"/><rect x="532.8" y="565.3" width="80.5" height="10" rx="5" fill="#e3aa30"/><path d="M537.5,621 C542,600 555,589.7 573.3,589.7 C591.6,589.7 604,600 608.7,621" fill="none" stroke="#e3aa30" stroke-width="10.2" stroke-linecap="round"/><path d="M560.8,677.5 C560,650 562,629.5 573.3,629.5 C584.6,629.5 586.5,650 586.3,677.5" fill="none" stroke="#e3aa30" stroke-width="11.5" stroke-linecap="round"/><rect x="534.3000000000001" y="568.1" width="3.8" height="3.8" fill="#b7cff4" stroke="#8c8c8c" stroke-width="1"/><rect x="561.9" y="568.1" width="3.8" height="3.8" fill="#b7cff4" stroke="#8c8c8c" stroke-width="1"/><rect x="578.4" y="568.1" width="3.8" height="3.8" fill="#b7cff4" stroke="#8c8c8c" stroke-width="1"/><rect x="606.8000000000001" y="568.1" width="3.8" height="3.8" fill="#b7cff4" stroke="#8c8c8c" stroke-width="1"/><rect x="534.3000000000001" y="618.9" width="3.8" height="3.8" fill="#b7cff4" stroke="#8c8c8c" stroke-width="1"/><rect x="606.8000000000001" y="618.9" width="3.8" height="3.8" fill="#b7cff4" stroke="#8c8c8c" stroke-width="1"/><rect x="558.9" y="675.6" width="3.8" height="3.8" fill="#b7cff4" stroke="#8c8c8c" stroke-width="1"/><rect x="584.4" y="675.6" width="3.8" height="3.8" fill="#b7cff4" stroke="#8c8c8c" stroke-width="1"/><g transform="translate(629.5,559.5) scale(0.95)"><path d="M1.5,16.8 L3.3,8.3 L9.4,6.2 L12.6,8.8 L10,15.2Z" fill="#fff"/><path d="M1.8,16.5 L6.5,11.5" stroke="#5d96e5" stroke-width="0.8"/><circle cx="6.8" cy="11" r="1" fill="#5d96e5"/><path d="M11.6,4 L15.3,7.8 M14.2,1.4 L17.4,5.1" stroke="#fff" stroke-width="1.7"/></g><g transform="translate(628.7,584.2) scale(1.0)"><path d="M0,0 L16.4,7.1 L8.9,8.9 L2.9,16.4Z" fill="#fff"/></g><circle cx="731.1" cy="583.6" r="15.4" fill="#f5e384"/><rect x="718.9" y="596" width="24.5" height="47" rx="3" fill="#f5e384"/><path d="M696,632.8 C705,605 718,601.4 731.1,601.4 C744,601.4 758,605 767.1,633.5" fill="none" stroke="#e3aa30" stroke-width="10.5" stroke-linecap="round"/><path d="M720.3,678 C719,650 721,629.5 732.1,629.5 C743,629.5 746,650 744.8,678" fill="none" stroke="#e3aa30" stroke-width="12" stroke-linecap="round"/><path d="M935.5,605 L935.5,630" fill="none" stroke="#000" stroke-width="31" stroke-linecap="round" stroke-linejoin="round"/><path d="M928,625 L925.5,678" fill="none" stroke="#000" stroke-width="19" stroke-linecap="round" stroke-linejoin="round"/><path d="M943,625 L949.5,678" fill="none" stroke="#000" stroke-width="19" stroke-linecap="round" stroke-linejoin="round"/><path d="M924,608 C912,614 904,622 901,633" fill="none" stroke="#000" stroke-width="17" stroke-linecap="round" stroke-linejoin="round"/><path d="M947,604 C962,602 973,594 979,578" fill="none" stroke="#000" stroke-width="17.5" stroke-linecap="round" stroke-linejoin="round"/><circle cx="935.5" cy="584.4" r="19.5" fill="#000"/><path d="M849,620 L849,640" fill="none" stroke="#000" stroke-width="26" stroke-linecap="round" stroke-linejoin="round"/><path d="M843,642 L841,672" fill="none" stroke="#000" stroke-width="17.5" stroke-linecap="round" stroke-linejoin="round"/><path d="M853,643 L865,650.5 L857,665.5" fill="none" stroke="#000" stroke-width="17.5" stroke-linecap="round" stroke-linejoin="round"/><path d="M857,617 C866,616 872,614 877.5,612.5" fill="none" stroke="#000" stroke-width="16" stroke-linecap="round" stroke-linejoin="round"/><path d="M841,621 C835,625 830,630 828,633.5 L839,635" fill="none" stroke="#000" stroke-width="16" stroke-linecap="round" stroke-linejoin="round"/><circle cx="848.4" cy="606" r="14" fill="#000"/><path d="M998,620 L998,642" fill="none" stroke="#000" stroke-width="24" stroke-linecap="round" stroke-linejoin="round"/><path d="M993,642 L991,672" fill="none" stroke="#000" stroke-width="17.5" stroke-linecap="round" stroke-linejoin="round"/><path d="M1000,644 L1005.5,650 L1027.5,647.5" fill="none" stroke="#000" stroke-width="17.5" stroke-linecap="round" stroke-linejoin="round"/><path d="M1006,615 C1014,612 1020,607 1025,601" fill="none" stroke="#000" stroke-width="16" stroke-linecap="round" stroke-linejoin="round"/><path d="M991.5,622 C985,628 980,633 973.5,635" fill="none" stroke="#000" stroke-width="16" stroke-linecap="round" stroke-linejoin="round"/><circle cx="999" cy="606" r="14" fill="#000"/><path d="M935.5,605 L935.5,630" fill="none" stroke="#fff" stroke-width="23" stroke-linecap="round" stroke-linejoin="round"/><path d="M928,625 L925.5,678" fill="none" stroke="#fff" stroke-width="11" stroke-linecap="round" stroke-linejoin="round"/><path d="M943,625 L949.5,678" fill="none" stroke="#fff" stroke-width="11" stroke-linecap="round" stroke-linejoin="round"/><path d="M924,608 C912,614 904,622 901,633" fill="none" stroke="#fff" stroke-width="9" stroke-linecap="round" stroke-linejoin="round"/><path d="M947,604 C962,602 973,594 979,578" fill="none" stroke="#fff" stroke-width="9.5" stroke-linecap="round" stroke-linejoin="round"/><circle cx="935.5" cy="584.4" r="15.5" fill="#fff"/><path d="M849,620 L849,640" fill="none" stroke="#fff" stroke-width="18" stroke-linecap="round" stroke-linejoin="round"/><path d="M843,642 L841,672" fill="none" stroke="#fff" stroke-width="9.5" stroke-linecap="round" stroke-linejoin="round"/><path d="M853,643 L865,650.5 L857,665.5" fill="none" stroke="#fff" stroke-width="9.5" stroke-linecap="round" stroke-linejoin="round"/><path d="M857,617 C866,616 872,614 877.5,612.5" fill="none" stroke="#fff" stroke-width="8" stroke-linecap="round" stroke-linejoin="round"/><path d="M841,621 C835,625 830,630 828,633.5 L839,635" fill="none" stroke="#fff" stroke-width="8" stroke-linecap="round" stroke-linejoin="round"/><circle cx="848.4" cy="606" r="10" fill="#fff"/><path d="M998,620 L998,642" fill="none" stroke="#fff" stroke-width="16" stroke-linecap="round" stroke-linejoin="round"/><path d="M993,642 L991,672" fill="none" stroke="#fff" stroke-width="9.5" stroke-linecap="round" stroke-linejoin="round"/><path d="M1000,644 L1005.5,650 L1027.5,647.5" fill="none" stroke="#fff" stroke-width="9.5" stroke-linecap="round" stroke-linejoin="round"/><path d="M1006,615 C1014,612 1020,607 1025,601" fill="none" stroke="#fff" stroke-width="8" stroke-linecap="round" stroke-linejoin="round"/><path d="M991.5,622 C985,628 980,633 973.5,635" fill="none" stroke="#fff" stroke-width="8" stroke-linecap="round" stroke-linejoin="round"/><circle cx="999" cy="606" r="10" fill="#fff"/><text x="885" y="576" font-family="Liberation Serif" font-style="italic" font-size="18" fill="#fff">fx</text><text x="525" y="705.8" text-anchor="middle" font-size="13.7" fill="#eef3fc" textLength="152" lengthAdjust="spacingAndGlyphs">create a circle, a rounded</text><text x="525" y="717.05" text-anchor="middle" font-size="13.7" fill="#eef3fc" textLength="121.6" lengthAdjust="spacingAndGlyphs">rectangle and a line,</text><text x="525" y="728.3" text-anchor="middle" font-size="13.7" fill="#eef3fc" textLength="169" lengthAdjust="spacingAndGlyphs">add two nodes in the centre</text><text x="525" y="739.55" text-anchor="middle" font-size="13.7" fill="#eef3fc" textLength="159" lengthAdjust="spacingAndGlyphs">and move the outer nodes</text><text x="732" y="705.8" text-anchor="middle" font-size="13.7" fill="#eef3fc" textLength="111" lengthAdjust="spacingAndGlyphs">arrange and group</text><text x="939" y="705.8" text-anchor="middle" font-size="13.7" fill="#eef3fc" textLength="127" lengthAdjust="spacingAndGlyphs">add an outline fx and</text><text x="939" y="716.9" text-anchor="middle" font-size="13.7" fill="#eef3fc" textLength="164" lengthAdjust="spacingAndGlyphs">colour overlay to the group</text><text x="939" y="728.0" text-anchor="middle" font-size="13.7" fill="#eef3fc" textLength="166" lengthAdjust="spacingAndGlyphs">and easily adjust the curves</text><text x="939" y="739.0999999999999" text-anchor="middle" font-size="13.7" fill="#eef3fc" textLength="103.3" lengthAdjust="spacingAndGlyphs">for arms and legs</text></g></defs></svg>
<svg style="left:280px;top:208px" width="894" height="633" viewBox="280 208 894 633"><use href="#pgc"/></svg>
<div class="a" style="left:280px;top:208px;width:895px;height:1px;background:#8a8a8a;"></div>
<div class="a" style="left:280px;top:840px;width:895px;height:1px;background:#8a8a8a;"></div>
<div class="a" style="left:280px;top:208px;width:1px;height:633px;background:#8a8a8a;"></div>
<div class="a" style="left:1174px;top:208px;width:1px;height:633px;background:#8a8a8a;"></div>
<div class="a" style="left:55px;top:180px;width:158px;height:6px;background:#5b95e3;"></div>
<div class="t" style="left:134px;transform:translateX(-50%) scaleX(0.93);top:198px;font-size:12px;color:#e0e0e0;font-weight:400;">Page 5</div>
<svg style="left:55px;top:235px;" width="158" height="112" viewBox="0 0 158 112"><rect x="0" y="0" width="158" height="112" fill="#5b95e3"/><text font-family="Liberation Sans" x="13.2" y="13.1" font-size="3.6" fill="#3a5a9a" opacity="0.8" textLength="27" lengthAdjust="spacingAndGlyphs">Lines and strokes</text><text font-family="Liberation Sans" x="13.5" y="20.0" font-size="3.4" fill="#fff" opacity="0.75" textLength="32.3" lengthAdjust="spacingAndGlyphs">Using the pen tool - basics</text><text font-family="Liberation Sans" x="13.5" y="25.9" font-size="3.4" fill="#fff" opacity="0.75" textLength="36.5" lengthAdjust="spacingAndGlyphs">Using the pen tool - simplified</text><text font-family="Liberation Sans" x="13.5" y="31.8" font-size="3.4" fill="#fff" opacity="0.75" textLength="33.3" lengthAdjust="spacingAndGlyphs">Drawing a simple stick man</text><text font-family="Liberation Sans" x="13.5" y="37.7" font-size="3.4" fill="#fff" opacity="0.75" textLength="31.400000000000006" lengthAdjust="spacingAndGlyphs">Creating simple stick man</text><text font-family="Liberation Sans" x="13.5" y="43.6" font-size="3.4" fill="#fff" opacity="0.75" textLength="33.3" lengthAdjust="spacingAndGlyphs">Adding thickness to a curve</text><text font-family="Liberation Sans" x="13.5" y="49.5" font-size="3.4" fill="#fff" opacity="0.75" textLength="33.3" lengthAdjust="spacingAndGlyphs">Wavy lines using Alignment</text><text font-family="Liberation Sans" x="13.5" y="55.400000000000006" font-size="3.4" fill="#fff" opacity="0.75" textLength="44.5" lengthAdjust="spacingAndGlyphs">Coffee steam using the pressure curve</text><text font-family="Liberation Sans" x="13.5" y="61.300000000000004" font-size="3.4" fill="#fff" opacity="0.75" textLength="52.2" lengthAdjust="spacingAndGlyphs">Using the dashed stroke to create a pattern</text><text font-family="Liberation Sans" x="13.5" y="67.2" font-size="3.4" fill="#fff" opacity="0.75" textLength="30.5" lengthAdjust="spacingAndGlyphs">Creating a dashed outline</text><text font-family="Liberation Sans" x="13.5" y="73.1" font-size="3.4" fill="#fff" opacity="0.75" textLength="52.5" lengthAdjust="spacingAndGlyphs">Adjusting the stroke gradient to fit gradient</text><text font-family="Liberation Sans" x="13.5" y="79.0" font-size="3.4" fill="#fff" opacity="0.75" textLength="45.2" lengthAdjust="spacingAndGlyphs">Combining lines with tapered strokes</text><text font-family="Liberation Sans" x="13.5" y="84.9" font-size="3.4" fill="#fff" opacity="0.75" textLength="44.2" lengthAdjust="spacingAndGlyphs">Combining and mirroring line designs</text><text font-family="Liberation Sans" x="13.5" y="90.80000000000001" font-size="3.4" fill="#fff" opacity="0.75" textLength="46.099999999999994" lengthAdjust="spacingAndGlyphs">Designing monoweight lines with Brush</text><text font-family="Liberation Sans" x="13.5" y="96.7" font-size="3.4" fill="#fff" opacity="0.75" textLength="39.7" lengthAdjust="spacingAndGlyphs">Creating a double line with Brush</text><text font-family="Liberation Sans" x="81" y="20.0" font-size="3.4" fill="#fff" opacity="0.75" textLength="35.80000000000001" lengthAdjust="spacingAndGlyphs">Creating a dashed double line</text><text font-family="Liberation Sans" x="81" y="25.9" font-size="3.4" fill="#fff" opacity="0.75" textLength="59.80000000000001" lengthAdjust="spacingAndGlyphs">Creating a dashed double line - compound object</text><text font-family="Liberation Sans" x="81" y="31.8" font-size="3.4" fill="#fff" opacity="0.75" textLength="48.599999999999994" lengthAdjust="spacingAndGlyphs">Creating a dashed double line - example</text><text font-family="Liberation Sans" x="81" y="37.7" font-size="3.4" fill="#fff" opacity="0.75" textLength="40" lengthAdjust="spacingAndGlyphs">Adding an outline to Photo images</text><text font-family="Liberation Sans" x="81" y="43.6" font-size="3.4" fill="#fff" opacity="0.75" textLength="36.80000000000001" lengthAdjust="spacingAndGlyphs">Creating a contour for a sticker</text><text font-family="Liberation Sans" x="81" y="49.5" font-size="3.4" fill="#fff" opacity="0.75" textLength="20.80000000000001" lengthAdjust="spacingAndGlyphs">Designing planets</text><text font-family="Liberation Sans" x="81" y="55.400000000000006" font-size="3.4" fill="#fff" opacity="0.75" textLength="30.69999999999999" lengthAdjust="spacingAndGlyphs">Multiple strokes on a line</text><text font-family="Liberation Sans" x="81" y="61.300000000000004" font-size="3.4" fill="#fff" opacity="0.75" textLength="42.80000000000001" lengthAdjust="spacingAndGlyphs">Multiple strokes on a line - example</text><text font-family="Liberation Sans" x="81" y="67.2" font-size="3.4" fill="#fff" opacity="0.75" textLength="32.69999999999999" lengthAdjust="spacingAndGlyphs">Creating a perspective grid</text><text font-family="Liberation Sans" x="81" y="73.1" font-size="3.4" fill="#fff" opacity="0.75" textLength="56.599999999999994" lengthAdjust="spacingAndGlyphs">Creating custom lettering with pressure curves</text><text font-family="Liberation Sans" x="81" y="79.0" font-size="3.4" fill="#fff" opacity="0.75" textLength="36" lengthAdjust="spacingAndGlyphs">Emulating hand-drawn letters</text><text font-family="Liberation Sans" x="81" y="84.9" font-size="3.4" fill="#fff" opacity="0.75" textLength="29.80000000000001" lengthAdjust="spacingAndGlyphs">Creating a fuzzy monster</text><text font-family="Liberation Sans" x="81" y="90.80000000000001" font-size="3.4" fill="#fff" opacity="0.75" textLength="34" lengthAdjust="spacingAndGlyphs">Creating a comfier silhouette</text><text font-family="Liberation Sans" x="81" y="96.7" font-size="3.4" fill="#fff" opacity="0.75" textLength="28.69999999999999" lengthAdjust="spacingAndGlyphs">Adding detail to a trunk</text></svg>
<div class="t" style="left:134px;transform:translateX(-50%) scaleX(0.93);top:360px;font-size:12px;color:#e0e0e0;font-weight:400;">Page 6</div>
<svg style="left:55px;top:396px;" width="158" height="112" viewBox="0 0 158 112"><rect x="0" y="0" width="158" height="112" fill="#5b95e3"/><text font-family="Liberation Sans" x="13.2" y="13.1" font-size="3.6" fill="#3a5a9a" opacity="0.8" textLength="27" lengthAdjust="spacingAndGlyphs">Lines and strokes</text><text font-family="Liberation Sans" x="13.5" y="20.0" font-size="3.4" fill="#fff" opacity="0.75" textLength="29.5" lengthAdjust="spacingAndGlyphs">Designing lines: Brushes</text><text font-family="Liberation Sans" x="13.5" y="25.9" font-size="3.4" fill="#fff" opacity="0.75" textLength="38.5" lengthAdjust="spacingAndGlyphs">Using Mesh to make textures</text><text font-family="Liberation Sans" x="13.5" y="31.8" font-size="3.4" fill="#fff" opacity="0.75" textLength="46.0" lengthAdjust="spacingAndGlyphs">Creating a simple water wave pattern</text><text font-family="Liberation Sans" x="13.5" y="37.7" font-size="3.4" fill="#fff" opacity="0.75" textLength="22.5" lengthAdjust="spacingAndGlyphs">Designing waves 1</text><text font-family="Liberation Sans" x="13.5" y="43.6" font-size="3.4" fill="#fff" opacity="0.75" textLength="22.5" lengthAdjust="spacingAndGlyphs">Designing waves 2</text><text font-family="Liberation Sans" x="13.5" y="49.5" font-size="3.4" fill="#fff" opacity="0.75" textLength="22.5" lengthAdjust="spacingAndGlyphs">Designing waves 3</text><text font-family="Liberation Sans" x="13.5" y="55.400000000000006" font-size="3.4" fill="#fff" opacity="0.75" textLength="41.5" lengthAdjust="spacingAndGlyphs">Making a simple seagull silhouette</text><text font-family="Liberation Sans" x="13.5" y="61.300000000000004" font-size="3.4" fill="#fff" opacity="0.75" textLength="40.5" lengthAdjust="spacingAndGlyphs">Using Expanded lines for shading</text><text font-family="Liberation Sans" x="13.5" y="67.2" font-size="3.4" fill="#fff" opacity="0.75" textLength="43.5" lengthAdjust="spacingAndGlyphs">Making plants with pressure curves</text><text font-family="Liberation Sans" x="13.5" y="73.1" font-size="3.4" fill="#fff" opacity="0.75" textLength="22.5" lengthAdjust="spacingAndGlyphs">Creating fireworks</text><text font-family="Liberation Sans" x="13.5" y="79.0" font-size="3.4" fill="#fff" opacity="0.75" textLength="39.5" lengthAdjust="spacingAndGlyphs">Making more complex fireworks</text><text font-family="Liberation Sans" x="13.5" y="84.9" font-size="3.4" fill="#fff" opacity="0.75" textLength="24.200000000000003" lengthAdjust="spacingAndGlyphs">Fireworks - examples</text><text font-family="Liberation Sans" x="13.5" y="90.80000000000001" font-size="3.4" fill="#fff" opacity="0.75" textLength="35.5" lengthAdjust="spacingAndGlyphs">Designing a scene using lines</text><text font-family="Liberation Sans" x="13.5" y="96.7" font-size="3.4" fill="#fff" opacity="0.75" textLength="35.5" lengthAdjust="spacingAndGlyphs">Building a scene with shapes</text><text font-family="Liberation Sans" x="81" y="20.0" font-size="3.4" fill="#fff" opacity="0.75" textLength="44.599999999999994" lengthAdjust="spacingAndGlyphs">Drawing a vortex with a Spiral Brush</text><text font-family="Liberation Sans" x="81" y="25.9" font-size="3.4" fill="#fff" opacity="0.75" textLength="43" lengthAdjust="spacingAndGlyphs">Creating a lamp line art on shapes</text></svg>
<div class="t" style="left:134px;transform:translateX(-50%) scaleX(0.93);top:521px;font-size:12px;color:#e0e0e0;font-weight:400;">Page 7</div>
<svg style="left:55px;top:557px;" width="158" height="112" viewBox="0 0 1235 872"><rect x="0" y="0" width="1235" height="872" fill="#5b95e3"/>
<circle cx="50" cy="50" r="16" fill="none" stroke="#fff" stroke-width="7"/>
<text x="103" y="101" font-family="Liberation Sans" font-size="30" font-weight="bold" fill="#fff" opacity="0.95" text-anchor="start" textLength="380" lengthAdjust="spacingAndGlyphs">Using the pen tool - basics</text><text x="952" y="103" font-family="Liberation Sans" font-size="22" font-weight="bold" fill="#3a60a8" opacity="0.7" text-anchor="start" textLength="178" lengthAdjust="spacingAndGlyphs">lines &amp; strokes</text>
<polygon points="55,125 140,125 160,148 140,170 55,170 70,148" fill="#e08e2b"/><text x="78" y="163" font-family="Liberation Sans" font-size="34" font-weight="bold" fill="#fff" opacity="1" text-anchor="start" textLength="55" lengthAdjust="spacingAndGlyphs">NEW</text>
<path d="M205,160 L222,140 M212,150 l6,6" stroke="#fff" stroke-width="5"/>
<path d="M258,150 L435,165 L258,190 L415,200 C330,215 270,240 248,290" fill="none" stroke="#fff" stroke-width="7"/>
<path d="M520,180 H735" stroke="#fff" stroke-width="12"/><path d="M625,210 V290" stroke="#fff" stroke-width="7"/>
<path d="M710,285 H810 C880,285 930,170 985,170 H1030" fill="none" stroke="#fff" stroke-width="6"/>
<text x="340" y="338" font-family="Liberation Sans" font-size="13" font-weight="normal" fill="#fff" opacity="0.7" text-anchor="middle" textLength="210" lengthAdjust="spacingAndGlyphs">Clicking and create angles</text><text x="340" y="353" font-family="Liberation Sans" font-size="13" font-weight="normal" fill="#fff" opacity="0.7" text-anchor="middle" textLength="200" lengthAdjust="spacingAndGlyphs">hold Shift to snap angles</text><text x="340" y="368" font-family="Liberation Sans" font-size="13" font-weight="normal" fill="#fff" opacity="0.7" text-anchor="middle" textLength="170" lengthAdjust="spacingAndGlyphs">example size</text><text x="340" y="383" font-family="Liberation Sans" font-size="13" font-weight="normal" fill="#fff" opacity="0.7" text-anchor="middle" textLength="190" lengthAdjust="spacingAndGlyphs">dragging the shape</text><text x="340" y="398" font-family="Liberation Sans" font-size="13" font-weight="normal" fill="#fff" opacity="0.7" text-anchor="middle" textLength="230" lengthAdjust="spacingAndGlyphs">allows you to make smooth curves</text><text x="625" y="338" font-family="Liberation Sans" font-size="13" font-weight="normal" fill="#fff" opacity="0.7" text-anchor="middle" textLength="130" lengthAdjust="spacingAndGlyphs">holding Shift</text><text x="625" y="353" font-family="Liberation Sans" font-size="13" font-weight="normal" fill="#fff" opacity="0.7" text-anchor="middle" textLength="190" lengthAdjust="spacingAndGlyphs">while clicking locks the</text><text x="625" y="368" font-family="Liberation Sans" font-size="13" font-weight="normal" fill="#fff" opacity="0.7" text-anchor="middle" textLength="60" lengthAdjust="spacingAndGlyphs">angles</text><text x="910" y="338" font-family="Liberation Sans" font-size="13" font-weight="normal" fill="#fff" opacity="0.7" text-anchor="middle" textLength="160" lengthAdjust="spacingAndGlyphs">holding Shift while</text><text x="910" y="353" font-family="Liberation Sans" font-size="13" font-weight="normal" fill="#fff" opacity="0.7" text-anchor="middle" textLength="180" lengthAdjust="spacingAndGlyphs">dragging locks the</text><text x="910" y="368" font-family="Liberation Sans" font-size="13" font-weight="normal" fill="#fff" opacity="0.7" text-anchor="middle" textLength="180" lengthAdjust="spacingAndGlyphs">angle of the handles</text><text x="910" y="383" font-family="Liberation Sans" font-size="13" font-weight="normal" fill="#fff" opacity="0.7" text-anchor="middle" textLength="60" lengthAdjust="spacingAndGlyphs">to each</text><text x="103" y="463" font-family="Liberation Sans" font-size="30" font-weight="bold" fill="#fff" opacity="0.95" text-anchor="start" textLength="435" lengthAdjust="spacingAndGlyphs">Using the pen tool - simplified</text>
<path d="M210,540 L228,522 M218,532 l6,6" stroke="#fff" stroke-width="5"/><path d="M505,512 L530,528 L515,532 L510,548Z" fill="#fff"/>
<path d="M245,690 L255,580 L275,555 L295,565 L300,520 L350,560 L420,575 L455,610 L470,650 L440,665 L430,690 L400,660 L330,680 Z" fill="none" stroke="#fff" stroke-width="4"/>
<path d="M525,705 L535,585 L560,560 L580,570 L585,520 L640,560 L700,570 L740,610 L750,650 L720,670 L705,700 L690,665 L590,690 Z" fill="none" stroke="#fff" stroke-width="4"/>
<path d="M805,700 L810,590 L840,570 L855,520 L900,550 L890,510 L960,560 L1000,600 L1030,620 L1025,660 L990,670 L960,700 L930,710 Z" fill="#000"/>
<circle cx="950" cy="605" r="7" fill="#e0a030"/><path d="M900,670 L990,700 M905,680 L980,715" stroke="#ddd" stroke-width="3"/>
<text x="335" y="735" font-family="Liberation Sans" font-size="13" font-weight="normal" fill="#fff" opacity="0.7" text-anchor="middle" textLength="220" lengthAdjust="spacingAndGlyphs">Instead draw more, draw a</text><text x="335" y="750" font-family="Liberation Sans" font-size="13" font-weight="normal" fill="#fff" opacity="0.7" text-anchor="middle" textLength="220" lengthAdjust="spacingAndGlyphs">simple contour with clicks</text><text x="335" y="765" font-family="Liberation Sans" font-size="13" font-weight="normal" fill="#fff" opacity="0.7" text-anchor="middle" textLength="235" lengthAdjust="spacingAndGlyphs">straight lines with the Pen Tool</text><text x="655" y="735" font-family="Liberation Sans" font-size="13" font-weight="normal" fill="#fff" opacity="0.7" text-anchor="middle" textLength="225" lengthAdjust="spacingAndGlyphs">go in and the Node Tool drag</text><text x="655" y="750" font-family="Liberation Sans" font-size="13" font-weight="normal" fill="#fff" opacity="0.7" text-anchor="middle" textLength="210" lengthAdjust="spacingAndGlyphs">to smooth curves</text><text x="655" y="765" font-family="Liberation Sans" font-size="13" font-weight="normal" fill="#fff" opacity="0.7" text-anchor="middle" textLength="60" lengthAdjust="spacingAndGlyphs">curves</text><text x="905" y="735" font-family="Liberation Sans" font-size="13" font-weight="normal" fill="#fff" opacity="0.7" text-anchor="middle" textLength="245" lengthAdjust="spacingAndGlyphs">finish with Brush a smooth</text><text x="905" y="750" font-family="Liberation Sans" font-size="13" font-weight="normal" fill="#fff" opacity="0.7" text-anchor="middle" textLength="210" lengthAdjust="spacingAndGlyphs">with the Node Tool strokes</text></svg>
<div class="t" style="left:134px;transform:translateX(-50%) scaleX(0.93);top:682px;font-size:12px;color:#e0e0e0;font-weight:400;">Page 8</div>
<svg style="left:55px;top:718px" width="158" height="112" viewBox="280 208 894 633"><use href="#pgc"/></svg>
<div class="t" style="left:134px;transform:translateX(-50%) scaleX(0.93);top:843px;font-size:12px;color:#e0e0e0;font-weight:400;">Page 9</div>
<div class="a" style="left:1236px;top:104px;width:264px;height:29px;background:#282828;"></div><div class="a" style="left:1343px;top:106px;width:39px;height:27px;background:#353535;"></div><svg style="left:1243px;top:113px;" width="5" height="10" viewBox="0 0 5 10"><path d="M1 0V10M4 0V10" stroke="#6a6a6a" stroke-width="1"/></svg><div class="t" style="left:1258.6px;transform:scaleX(0.885);transform-origin:left;top:112px;font-size:12px;color:#bdbdbd;font-weight:400;">Color</div><div class="t" style="left:1293.8px;transform:scaleX(0.835);transform-origin:left;top:112px;font-size:12px;color:#bdbdbd;font-weight:400;">Swatches</div><div class="t" style="left:1347.4px;transform:scaleX(0.86);transform-origin:left;top:112px;font-size:12px;color:#e6e6e6;font-weight:400;">Stroke</div><svg style="left:1482px;top:113px;" width="11" height="10" viewBox="0 0 11 10"><path d="M0 1.2H11M0 5H11M0 8.8H11" stroke="#b8b8b8" stroke-width="2"/></svg>
<div class="t" style="left:1243.5px;transform:scaleX(0.82);transform-origin:left;top:144px;font-size:12px;color:#c8c8c8;font-weight:400;">Style:</div>
<div class="a" style="left:1281px;top:141px;width:26px;height:20px;background:#262626;border-radius:2px 0 0 2px"></div>
<div class="a" style="left:1307px;top:141px;width:78px;height:20px;background:#3e3e3e;border-radius:0 2px 2px 0"></div>
<div class="a" style="left:1332px;top:141px;width:1px;height:20px;background:#353535;"></div>
<div class="a" style="left:1358px;top:141px;width:1px;height:20px;background:#353535;"></div>
<svg style="left:1286px;top:143px;" width="15" height="15" viewBox="0 0 15 15"><circle cx="7.5" cy="7.5" r="6.6" fill="none" stroke="#e0e0e0" stroke-width="1.2"/><path d="M5 5L10 10M10 5L5 10" stroke="#e0e0e0" stroke-width="1.2"/></svg>
<svg style="left:1313px;top:144px;" width="14" height="14" viewBox="0 0 14 14"><path d="M1 13L13 1" stroke="#e0e0e0" stroke-width="1.6" stroke-linecap="round"/></svg>
<svg style="left:1339px;top:144px;" width="14" height="14" viewBox="0 0 14 14"><path d="M1 13L13 1" stroke="#e0e0e0" stroke-width="1.6" stroke-dasharray="2.5 2.5" stroke-linecap="round"/></svg>
<svg style="left:1365px;top:144px;" width="14" height="14" viewBox="0 0 14 14"><path d="M13 1 C10 3 6 7 5 9 L6 10 C8 8 11 4 13 1Z" fill="#e0e0e0" stroke="#e0e0e0" stroke-width="1"/><path d="M5 9 C3 9 2 11 1 13 C3 13 5 12 6 10Z" fill="#e0e0e0"/></svg>
<div class="t" style="left:1243.5px;transform:scaleX(0.9);transform-origin:left;top:172px;font-size:12px;color:#c8c8c8;font-weight:400;">Width:</div>
<div class="a" style="left:1283px;top:175px;width:160px;height:4.5px;background:#262626;border-radius:2px"></div>
<svg style="left:1282px;top:172px;" width="10" height="10" viewBox="0 0 10 10"><circle cx="5" cy="5" r="5" fill="#e0e0e0"/></svg>
<div class="a" style="left:1447px;top:167.5px;width:48px;height:19px;background:#262626;border-radius:2px"></div>
<div class="t" style="left:1452px;transform:scaleX(0.93);transform-origin:left;top:172px;font-size:12px;color:#e6e6e6;font-weight:400;">0 pt</div>
<div class="t" style="left:1243.5px;transform:scaleX(0.815);transform-origin:left;top:195px;font-size:12px;color:#c8c8c8;font-weight:400;">Cap:</div>
<div class="a" style="left:1281.0px;top:192px;width:25.1px;height:19px;background:#262626;border-radius:2px"></div><div class="a" style="left:1306.7px;top:192px;width:25.1px;height:19px;background:#404040;border-radius:2px"></div><div class="a" style="left:1332.4px;top:192px;width:25.1px;height:19px;background:#404040;border-radius:2px"></div>
<svg style="left:1285px;top:195px;" width="18" height="13" viewBox="0 0 18 13"><path d="M2 2H10 A4.5 4.5 0 0 1 10 11H2Z" fill="#e6e6e6"/><rect x="2" y="5.5" width="8" height="2" fill="#262626"/><circle cx="10" cy="6.5" r="1.2" fill="#262626"/></svg>
<svg style="left:1311px;top:195px;" width="18" height="13" viewBox="0 0 18 13"><path d="M2 2H14V11H2Z" fill="#e6e6e6"/><rect x="2" y="5.5" width="10" height="2" fill="#404040"/><circle cx="12" cy="6.5" r="1.2" fill="#404040"/><path d="M12 2 V11" stroke="#404040" stroke-width="0.5"/></svg>
<svg style="left:1337px;top:195px;" width="18" height="13" viewBox="0 0 18 13"><path d="M2 2H14V11H2Z" fill="#e6e6e6"/><rect x="2" y="5.5" width="9" height="2" fill="#404040"/><circle cx="10.5" cy="6.5" r="1.2" fill="#404040"/></svg>
<div class="t" style="left:1243.5px;transform:scaleX(0.835);transform-origin:left;top:220px;font-size:12px;color:#c8c8c8;font-weight:400;">Join:</div>
<div class="a" style="left:1281.0px;top:217px;width:25.1px;height:19px;background:#262626;border-radius:2px"></div><div class="a" style="left:1306.7px;top:217px;width:25.1px;height:19px;background:#404040;border-radius:2px"></div><div class="a" style="left:1332.4px;top:217px;width:25.1px;height:19px;background:#404040;border-radius:2px"></div>
<svg style="left:1286px;top:219px;" width="16" height="16" viewBox="0 0 16 16"><path d="M1 1 Q1 14 14 14" fill="none" stroke="#e6e6e6" stroke-width="1.3"/><path d="M4 1 H8 Q8 9 14 9 V12 Q4 12 4 1Z" fill="#9a9a9a"/><path d="M4 1 Q4 12 14 12" fill="none" stroke="#e6e6e6" stroke-width="0.8"/></svg>
<svg style="left:1312px;top:219px;" width="16" height="16" viewBox="0 0 16 16"><path d="M1 1 V8 L7 14 H14" fill="none" stroke="#e6e6e6" stroke-width="1.3"/><path d="M4 1 H8 V6 L11 9 H14 V12 H7 L4 9Z" fill="#9a9a9a"/></svg>
<svg style="left:1338px;top:219px;" width="16" height="16" viewBox="0 0 16 16"><path d="M1 1 V14 H14" fill="none" stroke="#e6e6e6" stroke-width="1.3"/><path d="M4 1 H8 V9 H14 V12 H4Z" fill="#9a9a9a"/></svg>
<div class="t" style="left:1417px;transform:scaleX(0.91);transform-origin:left;top:220px;font-size:12px;color:#c8c8c8;font-weight:400;">Miter:</div>
<div class="a" style="left:1447px;top:215px;width:48px;height:19px;background:#262626;border-radius:2px"></div>
<div class="t" style="left:1453px;transform:scaleX(0.93);transform-origin:left;top:219px;font-size:12px;color:#e6e6e6;font-weight:400;">1.5</div>
<div class="t" style="left:1243.5px;transform:scaleX(0.9);transform-origin:left;top:245px;font-size:12px;color:#c8c8c8;font-weight:400;">Align:</div>
<div class="a" style="left:1281.0px;top:242px;width:25.1px;height:19px;background:#262626;border-radius:2px"></div><div class="a" style="left:1306.7px;top:242px;width:25.1px;height:19px;background:#404040;border-radius:2px"></div><div class="a" style="left:1332.4px;top:242px;width:25.1px;height:19px;background:#404040;border-radius:2px"></div>
<svg style="left:1286px;top:245px;" width="15" height="14" viewBox="0 0 15 14"><path d="M1 13 V1 H14 V5 H5 V13Z" fill="#e6e6e6"/><path d="M7 13 V7 H14 V11 H11 V13Z" fill="#e6e6e6"/><circle cx="4.5" cy="4.5" r="1.2" fill="#262626"/></svg>
<svg style="left:1312px;top:244px;" width="15" height="15" viewBox="0 0 15 15"><path d="M1 14 V2 H14 V6 H6 V14Z" fill="#e6e6e6"/><path d="M8 14 V8 H14 V11 H11 V14Z" fill="#e6e6e6"/><circle cx="3.5" cy="3" r="1.2" fill="#404040"/></svg>
<svg style="left:1338px;top:245px;" width="15" height="14" viewBox="0 0 15 14"><path d="M1 13 V1 H14 V5 H5 V13Z" fill="#e6e6e6"/><circle cx="6" cy="7" r="1.2" fill="#404040"/></svg>
<div class="a" style="left:1240px;top:270px;width:256px;height:1px;background:#2a2a2a;"></div>
<div class="t" style="left:1243.5px;transform:scaleX(0.88);transform-origin:left;top:288px;font-size:12px;color:#c8c8c8;font-weight:400;">Order:</div>
<div class="a" style="left:1281px;top:285px;width:25px;height:19px;background:#484848;border-radius:2px"></div>
<div class="a" style="left:1307px;top:285px;width:25px;height:19px;background:#262626;border-radius:2px"></div>
<svg style="left:1287px;top:288px;" width="14" height="14" viewBox="0 0 14 14"><rect x="1" y="1" width="8" height="8" fill="none" stroke="#e0e0e0" stroke-width="1.4"/><rect x="4.5" y="4.5" width="8.5" height="8.5" fill="#9a9a9a"/></svg>
<svg style="left:1313px;top:288px;" width="14" height="14" viewBox="0 0 14 14"><rect x="3.5" y="3.5" width="9.5" height="9.5" fill="none" stroke="#aaa" stroke-width="1"/><rect x="1" y="1" width="8.5" height="8.5" fill="#262626" stroke="#e6e6e6" stroke-width="1.4"/><rect x="3.5" y="3.5" width="3.5" height="3.5" fill="#e6e6e6"/></svg>
<div class="a" style="left:1399px;top:287px;width:12px;height:12px;background:#262626;border-radius:2px"></div>
<div class="t" style="left:1415.6px;transform:scaleX(0.88);transform-origin:left;top:288px;font-size:12px;color:#d8d8d8;font-weight:400;">Scale with object</div>
<div class="a" style="left:1240px;top:314px;width:256px;height:1px;background:#2a2a2a;"></div>
<div class="t" style="left:1243.5px;transform:scaleX(0.84);transform-origin:left;top:331px;font-size:12px;color:#7a7a7a;font-weight:400;">Start:</div>
<div class="t" style="left:1243.5px;transform:scaleX(0.8);transform-origin:left;top:355px;font-size:12px;color:#7a7a7a;font-weight:400;">End:</div>
<div class="a" style="left:1281px;top:327px;width:42px;height:20px;background:#303030;border-radius:2px"></div>
<div class="a" style="left:1328px;top:327px;width:63px;height:20px;background:#303030;border-radius:2px"></div>
<svg style="left:1311px;top:335px;" width="8" height="5" viewBox="0 0 8 5"><path d="M0.5 0.5L4 4L7.5 0.5" fill="none" stroke="#9a9a9a" stroke-width="1"/></svg>
<svg style="left:1380px;top:335px;" width="8" height="5" viewBox="0 0 8 5"><path d="M0.5 0.5L4 4L7.5 0.5" fill="none" stroke="#9a9a9a" stroke-width="1"/></svg>
<div class="a" style="left:1281px;top:352px;width:42px;height:20px;background:#303030;border-radius:2px"></div>
<div class="a" style="left:1328px;top:352px;width:63px;height:20px;background:#303030;border-radius:2px"></div>
<svg style="left:1311px;top:360px;" width="8" height="5" viewBox="0 0 8 5"><path d="M0.5 0.5L4 4L7.5 0.5" fill="none" stroke="#9a9a9a" stroke-width="1"/></svg>
<svg style="left:1380px;top:360px;" width="8" height="5" viewBox="0 0 8 5"><path d="M0.5 0.5L4 4L7.5 0.5" fill="none" stroke="#9a9a9a" stroke-width="1"/></svg>
<svg style="left:1394px;top:337px;" width="8" height="20" viewBox="0 0 8 20"><path d="M1 7 V1.5 H7 V7 M1 13 V18.5 H7 V13" fill="none" stroke="#7a7a7a" stroke-width="1"/><path d="M0 10H2M6 10H8" stroke="#7a7a7a" stroke-width="1"/></svg>
<div class="a" style="left:1444px;top:328px;width:25px;height:19px;background:#262626;border-radius:2px 0 0 2px"></div>
<div class="a" style="left:1469px;top:328px;width:25px;height:19px;background:#484848;border-radius:0 2px 2px 0"></div>
<svg style="left:1449px;top:332px;" width="15" height="11" viewBox="0 0 15 11"><path d="M0 5.5H9M6 2.5L9 5.5L6 8.5" fill="none" stroke="#8a8a8a" stroke-width="1.4"/><path d="M12.5 0V11" stroke="#8a8a8a" stroke-width="1.4"/></svg>
<svg style="left:1474px;top:332px;" width="15" height="11" viewBox="0 0 15 11"><path d="M0 5.5H14M10.5 2L14 5.5L10.5 9" fill="none" stroke="#8a8a8a" stroke-width="1.4"/><path d="M7 0V11" stroke="#8a8a8a" stroke-width="1.2"/></svg>
<div class="a" style="left:1444px;top:353px;width:23px;height:17px;background:#3c3c3c;border-radius:2px"></div>
<div class="a" style="left:1470px;top:353px;width:23px;height:17px;background:#3c3c3c;border-radius:2px"></div>
<svg style="left:1448px;top:355px;" width="15" height="13" viewBox="0 0 15 13"><path d="M3 4H12L10 2M12 9H3L5 11" fill="none" stroke="#7a7a7a" stroke-width="1.2"/><path d="M3 4 V7M12 9V6" stroke="#7a7a7a" stroke-width="1.2"/></svg>
<svg style="left:1474px;top:354px;" width="15" height="15" viewBox="0 0 15 15"><circle cx="7.5" cy="7.5" r="5.5" fill="none" stroke="#7a7a7a" stroke-width="1.1" stroke-dasharray="6 2.6"/><path d="M5.5 5.5L9.5 9.5M9.5 5.5L5.5 9.5" stroke="#7a7a7a" stroke-width="1"/></svg>
<div class="a" style="left:1240px;top:381px;width:256px;height:1px;background:#2a2a2a;"></div>
<div class="a" style="left:1243.5px;top:398px;width:77.5px;height:20px;background:#404040;border-radius:3px"></div>
<div class="t" style="left:1252px;transform:scaleX(0.93);transform-origin:left;top:403px;font-size:12px;color:#e0e0e0;font-weight:400;">Properties...</div>
<div class="t" style="left:1326.5px;transform:scaleX(0.815);transform-origin:left;top:403px;font-size:12px;color:#c8c8c8;font-weight:400;">Pressure:</div>
<div class="a" style="left:1373px;top:399px;width:77px;height:18.5px;background:#4a4a4a;border-radius:2px"></div>
<div class="a" style="left:1375px;top:401px;width:73px;height:1px;background:#6a6a6a;"></div>
<div class="a" style="left:1236px;top:434px;width:264px;height:1px;background:#393939;"></div>
<div class="a" style="left:1236px;top:436px;width:264px;height:29px;background:#282828;"></div><div class="a" style="left:1369px;top:438px;width:36.5px;height:27px;background:#353535;"></div><svg style="left:1243px;top:445px;" width="5" height="10" viewBox="0 0 5 10"><path d="M1 0V10M4 0V10" stroke="#6a6a6a" stroke-width="1"/></svg><div class="t" style="left:1258.8px;transform:scaleX(0.81);transform-origin:left;top:444px;font-size:12px;color:#bdbdbd;font-weight:400;">Layers</div><div class="t" style="left:1298px;transform:scaleX(0.85);transform-origin:left;top:444px;font-size:12px;color:#bdbdbd;font-weight:400;">Chr</div><div class="t" style="left:1324.5px;transform:scaleX(0.85);transform-origin:left;top:444px;font-size:12px;color:#bdbdbd;font-weight:400;">Par</div><div class="t" style="left:1349px;transform:scaleX(0.85);transform-origin:left;top:444px;font-size:12px;color:#bdbdbd;font-weight:400;">TSt</div><div class="t" style="left:1373px;transform:scaleX(0.83);transform-origin:left;top:444px;font-size:12px;color:#e6e6e6;font-weight:400;">Styles</div><svg style="left:1482px;top:445px;" width="11" height="10" viewBox="0 0 11 10"><path d="M0 1.2H11M0 5H11M0 8.8H11" stroke="#b8b8b8" stroke-width="2"/></svg>
<div class="a" style="left:1240px;top:469px;width:256px;height:19.5px;background:#212121;border-radius:3px"></div>
<svg style="left:1245px;top:472px;" width="14" height="14" viewBox="0 0 14 14"><circle cx="5.5" cy="5.5" r="4.3" fill="none" stroke="#d8d8d8" stroke-width="1.3"/><path d="M8.5 8.5L13 13" stroke="#d8d8d8" stroke-width="1.5"/></svg>
<div class="t" style="left:1261px;transform:scaleX(0.93);transform-origin:left;top:473px;font-size:12px;color:#a0a0a0;font-weight:400;">Search</div>
<div class="a" style="left:1241px;top:497.5px;width:95.5px;height:16.5px;background:#404040;border-radius:2px"></div>
<svg style="left:1244px;top:500px;" width="12" height="11" viewBox="0 0 12 11"><path d="M5 3 L7 1 Q8.5 -0.2 10 1 Q11.2 2.5 10 4 L8 6 M6 8 L4 10 Q2.5 11.2 1 10 Q-0.2 8.5 1 7 L3 5 M4 7 L7 4" fill="none" stroke="#c8c8c8" stroke-width="1.1"/></svg>
<div class="t" style="left:1262px;transform:scaleX(0.93);transform-origin:left;top:500px;font-size:12px;color:#e0e0e0;font-weight:400;">Default</div>
<svg style="left:1326px;top:503px;" width="8" height="5" viewBox="0 0 8 5"><path d="M0.5 0.5L4 4L7.5 0.5" fill="none" stroke="#d0d0d0" stroke-width="1.1"/></svg>
<div class="a" style="left:1238px;top:523px;width:62px;height:63.5px;background:#383838;border-radius:2px"></div>
<svg style="left:1248.5px;top:526.5px;" width="41" height="41" viewBox="0 0 41 41"><defs><clipPath id="clUnicorn"><rect x="0" y="0" width="41" height="41" rx="8"/></clipPath></defs><g clip-path="url(#clUnicorn)"><defs><linearGradient id="ug" x1="0" y1="0" x2="1" y2="1"><stop offset="0" stop-color="#7be07a"/><stop offset="0.3" stop-color="#42b8f0"/><stop offset="0.7" stop-color="#e040c8"/><stop offset="1" stop-color="#f8c838"/></linearGradient><linearGradient id="ug2" x1="0" y1="1" x2="1" y2="0"><stop offset="0" stop-color="#f8c838"/><stop offset="0.5" stop-color="#e040c8"/><stop offset="1" stop-color="#42b8f0"/></linearGradient></defs><rect x="0" y="0" width="41" height="41" rx="8" fill="url(#ug)"/><rect x="3" y="3" width="35" height="35" rx="6" fill="#e4eaf4"/><rect x="9.5" y="9.5" width="22" height="22" rx="3" transform="rotate(45 20.5 20.5)" fill="url(#ug2)"/><rect x="13.5" y="13.5" width="14" height="14" transform="rotate(45 20.5 20.5)" fill="#333"/></g></svg>
<div class="t" style="left:1269px;transform:translateX(-50%) scaleX(0.93);top:574px;font-size:12px;color:#e6e6e6;font-weight:400;">Unicorn</div>
<div class="a" style="left:1304px;top:523px;width:62px;height:63.5px;background:#383838;border-radius:2px"></div>
<svg style="left:1314.5px;top:526.5px;" width="41" height="41" viewBox="0 0 41 41"><defs><clipPath id="clLunar"><rect x="0" y="0" width="41" height="41" rx="8"/></clipPath></defs><g clip-path="url(#clLunar)"><rect x="0" y="0" width="41" height="41" rx="8" fill="#6f9ee2"/><g fill="none" stroke="#8cb6ee" stroke-width="0.8" opacity="0.8"><circle cx="3" cy="3" r="2.6"/><circle cx="10" cy="3" r="2.6"/><circle cx="17" cy="3" r="2.6"/><circle cx="24" cy="3" r="2.6"/><circle cx="31" cy="3" r="2.6"/><circle cx="38" cy="3" r="2.6"/><circle cx="3" cy="10" r="2.6"/><circle cx="10" cy="10" r="2.6"/><circle cx="17" cy="10" r="2.6"/><circle cx="24" cy="10" r="2.6"/><circle cx="31" cy="10" r="2.6"/><circle cx="38" cy="10" r="2.6"/><circle cx="3" cy="17" r="2.6"/><circle cx="10" cy="17" r="2.6"/><circle cx="17" cy="17" r="2.6"/><circle cx="24" cy="17" r="2.6"/><circle cx="31" cy="17" r="2.6"/><circle cx="38" cy="17" r="2.6"/><circle cx="3" cy="24" r="2.6"/><circle cx="10" cy="24" r="2.6"/><circle cx="17" cy="24" r="2.6"/><circle cx="24" cy="24" r="2.6"/><circle cx="31" cy="24" r="2.6"/><circle cx="38" cy="24" r="2.6"/><circle cx="3" cy="31" r="2.6"/><circle cx="10" cy="31" r="2.6"/><circle cx="17" cy="31" r="2.6"/><circle cx="24" cy="31" r="2.6"/><circle cx="31" cy="31" r="2.6"/><circle cx="38" cy="31" r="2.6"/><circle cx="3" cy="38" r="2.6"/><circle cx="10" cy="38" r="2.6"/><circle cx="17" cy="38" r="2.6"/><circle cx="24" cy="38" r="2.6"/><circle cx="31" cy="38" r="2.6"/><circle cx="38" cy="38" r="2.6"/></g><rect x="13.5" y="13.5" width="14" height="14" transform="rotate(45 20.5 20.5)" fill="#333"/></g></svg>
<div class="t" style="left:1335px;transform:translateX(-50%) scaleX(0.93);top:574px;font-size:12px;color:#e6e6e6;font-weight:400;">Lunar</div>
<div class="a" style="left:1370.5px;top:523px;width:62px;height:63.5px;background:#383838;border-radius:2px"></div>
<svg style="left:1381.0px;top:526.5px;" width="41" height="41" viewBox="0 0 41 41"><defs><clipPath id="clScribbler"><rect x="0" y="0" width="41" height="41" rx="8"/></clipPath></defs><g clip-path="url(#clScribbler)"><rect x="0" y="0" width="41" height="41" rx="8" fill="#d6a2a8"/><path d="M8 0 L41 0 L41 41 L16 41 Z" fill="#b48c90"/><g fill="#4a4444" opacity="0.75"><rect x="9.8" y="22.3" width="0.9" height="0.9"/><rect x="15.2" y="24.8" width="0.9" height="0.9"/><rect x="25.7" y="2.7" width="0.9" height="0.9"/><rect x="0.5" y="34.3" width="0.9" height="0.9"/><rect x="10.6" y="9.6" width="0.9" height="0.9"/><rect x="40.8" y="19.3" width="0.9" height="0.9"/><rect x="34.3" y="19.5" width="0.9" height="0.9"/><rect x="26.2" y="6.2" width="0.9" height="0.9"/><rect x="26.0" y="35.6" width="0.9" height="0.9"/><rect x="21.5" y="30.4" width="0.9" height="0.9"/><rect x="27.5" y="2.6" width="0.9" height="0.9"/><rect x="31.1" y="24.2" width="0.9" height="0.9"/><rect x="12.4" y="1.3" width="0.9" height="0.9"/><rect x="35.5" y="19.4" width="0.9" height="0.9"/><rect x="29.5" y="36.0" width="0.9" height="0.9"/><rect x="29.3" y="37.8" width="0.9" height="0.9"/><rect x="16.2" y="32.8" width="0.9" height="0.9"/><rect x="18.2" y="38.4" width="0.9" height="0.9"/><rect x="36.0" y="4.0" width="0.9" height="0.9"/><rect x="5.6" y="8.9" width="0.9" height="0.9"/><rect x="39.6" y="17.9" width="0.9" height="0.9"/><rect x="25.7" y="12.3" width="0.9" height="0.9"/><rect x="20.8" y="15.8" width="0.9" height="0.9"/><rect x="14.4" y="24.0" width="0.9" height="0.9"/><rect x="24.0" y="37.1" width="0.9" height="0.9"/><rect x="28.0" y="38.1" width="0.9" height="0.9"/><rect x="35.1" y="40.6" width="0.9" height="0.9"/><rect x="27.5" y="6.7" width="0.9" height="0.9"/><rect x="35.3" y="39.5" width="0.9" height="0.9"/><rect x="37.1" y="23.3" width="0.9" height="0.9"/><rect x="29.3" y="8.7" width="0.9" height="0.9"/><rect x="34.1" y="23.5" width="0.9" height="0.9"/><rect x="11.7" y="2.6" width="0.9" height="0.9"/><rect x="35.0" y="40.6" width="0.9" height="0.9"/><rect x="3.6" y="32.8" width="0.9" height="0.9"/><rect x="16.8" y="6.2" width="0.9" height="0.9"/><rect x="12.0" y="31.5" width="0.9" height="0.9"/><rect x="35.8" y="1.8" width="0.9" height="0.9"/><rect x="25.2" y="1.8" width="0.9" height="0.9"/><rect x="29.5" y="13.6" width="0.9" height="0.9"/><rect x="36.1" y="40.2" width="0.9" height="0.9"/><rect x="20.7" y="40.9" width="0.9" height="0.9"/><rect x="12.7" y="3.2" width="0.9" height="0.9"/><rect x="24.6" y="1.3" width="0.9" height="0.9"/><rect x="8.1" y="16.7" width="0.9" height="0.9"/><rect x="25.0" y="6.4" width="0.9" height="0.9"/><rect x="1.7" y="35.6" width="0.9" height="0.9"/><rect x="12.9" y="39.3" width="0.9" height="0.9"/><rect x="36.8" y="15.5" width="0.9" height="0.9"/><rect x="18.9" y="21.3" width="0.9" height="0.9"/><rect x="26.4" y="24.4" width="0.9" height="0.9"/><rect x="22.9" y="25.4" width="0.9" height="0.9"/><rect x="38.6" y="20.8" width="0.9" height="0.9"/><rect x="17.7" y="29.5" width="0.9" height="0.9"/><rect x="9.7" y="12.3" width="0.9" height="0.9"/><rect x="40.1" y="21.4" width="0.9" height="0.9"/><rect x="22.5" y="0.5" width="0.9" height="0.9"/><rect x="17.0" y="23.8" width="0.9" height="0.9"/><rect x="0.8" y="25.2" width="0.9" height="0.9"/><rect x="25.9" y="2.5" width="0.9" height="0.9"/><rect x="25.7" y="19.1" width="0.9" height="0.9"/><rect x="27.9" y="14.5" width="0.9" height="0.9"/><rect x="29.0" y="30.3" width="0.9" height="0.9"/><rect x="0.9" y="2.5" width="0.9" height="0.9"/><rect x="27.7" y="39.5" width="0.9" height="0.9"/><rect x="10.3" y="18.7" width="0.9" height="0.9"/><rect x="24.3" y="13.1" width="0.9" height="0.9"/><rect x="14.9" y="12.8" width="0.9" height="0.9"/><rect x="15.1" y="24.4" width="0.9" height="0.9"/><rect x="12.3" y="15.5" width="0.9" height="0.9"/><rect x="31.7" y="1.1" width="0.9" height="0.9"/><rect x="23.3" y="30.1" width="0.9" height="0.9"/><rect x="12.7" y="9.1" width="0.9" height="0.9"/><rect x="33.0" y="9.8" width="0.9" height="0.9"/><rect x="7.7" y="17.8" width="0.9" height="0.9"/><rect x="28.6" y="4.2" width="0.9" height="0.9"/><rect x="13.2" y="13.7" width="0.9" height="0.9"/><rect x="34.2" y="18.0" width="0.9" height="0.9"/><rect x="35.1" y="6.9" width="0.9" height="0.9"/><rect x="13.8" y="26.7" width="0.9" height="0.9"/><rect x="36.3" y="18.5" width="0.9" height="0.9"/><rect x="9.2" y="5.0" width="0.9" height="0.9"/><rect x="21.7" y="7.8" width="0.9" height="0.9"/><rect x="33.1" y="34.4" width="0.9" height="0.9"/><rect x="7.5" y="11.4" width="0.9" height="0.9"/><rect x="33.1" y="26.3" width="0.9" height="0.9"/><rect x="33.1" y="14.2" width="0.9" height="0.9"/><rect x="5.3" y="12.0" width="0.9" height="0.9"/><rect x="32.5" y="11.1" width="0.9" height="0.9"/><rect x="14.2" y="17.1" width="0.9" height="0.9"/><rect x="17.2" y="16.8" width="0.9" height="0.9"/><rect x="37.7" y="6.4" width="0.9" height="0.9"/><rect x="0.2" y="38.7" width="0.9" height="0.9"/><rect x="36.1" y="40.5" width="0.9" height="0.9"/><rect x="17.8" y="39.0" width="0.9" height="0.9"/><rect x="38.0" y="9.1" width="0.9" height="0.9"/><rect x="30.6" y="34.3" width="0.9" height="0.9"/><rect x="27.2" y="21.3" width="0.9" height="0.9"/><rect x="11.9" y="14.0" width="0.9" height="0.9"/><rect x="9.3" y="2.8" width="0.9" height="0.9"/><rect x="24.1" y="11.8" width="0.9" height="0.9"/><rect x="33.2" y="1.8" width="0.9" height="0.9"/><rect x="37.0" y="28.4" width="0.9" height="0.9"/><rect x="37.9" y="36.8" width="0.9" height="0.9"/><rect x="36.9" y="23.7" width="0.9" height="0.9"/><rect x="0.5" y="30.6" width="0.9" height="0.9"/><rect x="7.0" y="12.3" width="0.9" height="0.9"/><rect x="27.2" y="21.5" width="0.9" height="0.9"/><rect x="17.0" y="38.5" width="0.9" height="0.9"/><rect x="25.1" y="14.0" width="0.9" height="0.9"/><rect x="10.4" y="35.3" width="0.9" height="0.9"/><rect x="19.6" y="32.1" width="0.9" height="0.9"/><rect x="14.4" y="8.1" width="0.9" height="0.9"/><rect x="21.9" y="33.5" width="0.9" height="0.9"/><rect x="7.0" y="32.5" width="0.9" height="0.9"/><rect x="37.8" y="33.0" width="0.9" height="0.9"/><rect x="33.8" y="0.3" width="0.9" height="0.9"/><rect x="25.8" y="35.4" width="0.9" height="0.9"/><rect x="2.0" y="11.1" width="0.9" height="0.9"/><rect x="11.0" y="21.6" width="0.9" height="0.9"/><rect x="17.3" y="19.4" width="0.9" height="0.9"/><rect x="31.8" y="0.1" width="0.9" height="0.9"/><rect x="2.2" y="5.2" width="0.9" height="0.9"/><rect x="5.1" y="2.8" width="0.9" height="0.9"/><rect x="40.0" y="35.0" width="0.9" height="0.9"/><rect x="3.5" y="20.6" width="0.9" height="0.9"/><rect x="13.0" y="12.9" width="0.9" height="0.9"/><rect x="14.4" y="26.5" width="0.9" height="0.9"/><rect x="24.1" y="14.8" width="0.9" height="0.9"/><rect x="7.8" y="13.5" width="0.9" height="0.9"/><rect x="5.1" y="22.8" width="0.9" height="0.9"/><rect x="29.4" y="15.6" width="0.9" height="0.9"/><rect x="3.3" y="7.3" width="0.9" height="0.9"/><rect x="15.3" y="24.8" width="0.9" height="0.9"/><rect x="32.1" y="15.6" width="0.9" height="0.9"/><rect x="32.8" y="25.5" width="0.9" height="0.9"/><rect x="17.7" y="15.3" width="0.9" height="0.9"/><rect x="20.3" y="28.8" width="0.9" height="0.9"/><rect x="17.2" y="28.5" width="0.9" height="0.9"/><rect x="18.9" y="10.0" width="0.9" height="0.9"/><rect x="22.0" y="28.5" width="0.9" height="0.9"/><rect x="2.9" y="17.4" width="0.9" height="0.9"/><rect x="17.5" y="36.1" width="0.9" height="0.9"/><rect x="38.4" y="15.3" width="0.9" height="0.9"/><rect x="36.8" y="32.4" width="0.9" height="0.9"/><rect x="10.7" y="19.0" width="0.9" height="0.9"/><rect x="5.0" y="33.3" width="0.9" height="0.9"/><rect x="27.2" y="36.4" width="0.9" height="0.9"/><rect x="32.5" y="27.4" width="0.9" height="0.9"/><rect x="30.1" y="23.1" width="0.9" height="0.9"/><rect x="4.2" y="24.1" width="0.9" height="0.9"/><rect x="0.2" y="5.9" width="0.9" height="0.9"/><rect x="31.7" y="1.8" width="0.9" height="0.9"/><rect x="3.8" y="4.1" width="0.9" height="0.9"/><rect x="36.1" y="7.3" width="0.9" height="0.9"/><rect x="1.0" y="34.5" width="0.9" height="0.9"/><rect x="5.0" y="34.6" width="0.9" height="0.9"/><rect x="27.6" y="34.3" width="0.9" height="0.9"/><rect x="39.0" y="23.7" width="0.9" height="0.9"/><rect x="32.7" y="1.5" width="0.9" height="0.9"/><rect x="31.5" y="21.0" width="0.9" height="0.9"/><rect x="29.3" y="4.4" width="0.9" height="0.9"/><rect x="30.7" y="38.3" width="0.9" height="0.9"/><rect x="2.5" y="13.3" width="0.9" height="0.9"/><rect x="23.1" y="34.0" width="0.9" height="0.9"/><rect x="9.9" y="7.4" width="0.9" height="0.9"/><rect x="10.2" y="25.3" width="0.9" height="0.9"/><rect x="30.9" y="16.1" width="0.9" height="0.9"/><rect x="15.1" y="16.3" width="0.9" height="0.9"/><rect x="14.4" y="17.1" width="0.9" height="0.9"/><rect x="3.4" y="20.5" width="0.9" height="0.9"/><rect x="39.9" y="16.9" width="0.9" height="0.9"/><rect x="30.6" y="6.6" width="0.9" height="0.9"/><rect x="28.3" y="31.0" width="0.9" height="0.9"/><rect x="27.6" y="21.2" width="0.9" height="0.9"/><rect x="19.8" y="26.4" width="0.9" height="0.9"/><rect x="36.8" y="6.1" width="0.9" height="0.9"/><rect x="3.9" y="30.7" width="0.9" height="0.9"/><rect x="37.6" y="21.2" width="0.9" height="0.9"/><rect x="18.2" y="29.5" width="0.9" height="0.9"/><rect x="7.6" y="11.0" width="0.9" height="0.9"/><rect x="8.2" y="24.0" width="0.9" height="0.9"/><rect x="12.9" y="9.5" width="0.9" height="0.9"/><rect x="28.3" y="39.1" width="0.9" height="0.9"/><rect x="12.1" y="28.9" width="0.9" height="0.9"/><rect x="16.9" y="35.0" width="0.9" height="0.9"/><rect x="24.0" y="11.0" width="0.9" height="0.9"/><rect x="8.9" y="0.9" width="0.9" height="0.9"/><rect x="19.7" y="15.7" width="0.9" height="0.9"/><rect x="7.1" y="14.8" width="0.9" height="0.9"/><rect x="13.2" y="31.7" width="0.9" height="0.9"/><rect x="5.9" y="40.6" width="0.9" height="0.9"/><rect x="19.7" y="24.6" width="0.9" height="0.9"/><rect x="19.2" y="34.2" width="0.9" height="0.9"/><rect x="33.7" y="22.8" width="0.9" height="0.9"/><rect x="19.7" y="29.5" width="0.9" height="0.9"/><rect x="35.1" y="16.4" width="0.9" height="0.9"/><rect x="30.1" y="39.4" width="0.9" height="0.9"/><rect x="19.2" y="9.4" width="0.9" height="0.9"/><rect x="9.6" y="29.4" width="0.9" height="0.9"/><rect x="27.7" y="39.3" width="0.9" height="0.9"/><rect x="35.0" y="9.9" width="0.9" height="0.9"/><rect x="7.8" y="10.6" width="0.9" height="0.9"/><rect x="7.7" y="28.9" width="0.9" height="0.9"/><rect x="35.2" y="36.9" width="0.9" height="0.9"/><rect x="10.5" y="35.5" width="0.9" height="0.9"/><rect x="12.9" y="17.4" width="0.9" height="0.9"/><rect x="29.9" y="3.5" width="0.9" height="0.9"/><rect x="3.8" y="34.2" width="0.9" height="0.9"/><rect x="12.0" y="14.6" width="0.9" height="0.9"/><rect x="23.8" y="27.7" width="0.9" height="0.9"/><rect x="0.3" y="13.7" width="0.9" height="0.9"/><rect x="17.9" y="19.9" width="0.9" height="0.9"/><rect x="8.6" y="24.0" width="0.9" height="0.9"/><rect x="39.2" y="16.0" width="0.9" height="0.9"/><rect x="22.3" y="4.9" width="0.9" height="0.9"/><rect x="11.3" y="27.3" width="0.9" height="0.9"/><rect x="4.6" y="36.4" width="0.9" height="0.9"/><rect x="37.3" y="4.0" width="0.9" height="0.9"/><rect x="38.6" y="15.3" width="0.9" height="0.9"/><rect x="31.7" y="31.1" width="0.9" height="0.9"/><rect x="12.1" y="27.7" width="0.9" height="0.9"/><rect x="26.8" y="33.0" width="0.9" height="0.9"/><rect x="10.9" y="30.9" width="0.9" height="0.9"/><rect x="39.4" y="27.6" width="0.9" height="0.9"/><rect x="22.0" y="4.6" width="0.9" height="0.9"/><rect x="20.2" y="14.4" width="0.9" height="0.9"/><rect x="29.4" y="27.8" width="0.9" height="0.9"/><rect x="23.2" y="7.5" width="0.9" height="0.9"/><rect x="26.5" y="25.9" width="0.9" height="0.9"/><rect x="7.3" y="36.5" width="0.9" height="0.9"/><rect x="26.9" y="5.0" width="0.9" height="0.9"/><rect x="38.2" y="5.8" width="0.9" height="0.9"/><rect x="13.6" y="29.5" width="0.9" height="0.9"/><rect x="24.5" y="22.8" width="0.9" height="0.9"/><rect x="26.5" y="18.8" width="0.9" height="0.9"/><rect x="12.8" y="7.2" width="0.9" height="0.9"/><rect x="2.8" y="29.3" width="0.9" height="0.9"/><rect x="30.9" y="22.3" width="0.9" height="0.9"/><rect x="30.3" y="14.7" width="0.9" height="0.9"/><rect x="10.9" y="15.7" width="0.9" height="0.9"/><rect x="35.8" y="1.7" width="0.9" height="0.9"/><rect x="20.7" y="10.1" width="0.9" height="0.9"/><rect x="31.5" y="14.5" width="0.9" height="0.9"/><rect x="13.6" y="16.5" width="0.9" height="0.9"/><rect x="22.2" y="31.6" width="0.9" height="0.9"/><rect x="14.5" y="34.7" width="0.9" height="0.9"/><rect x="4.6" y="11.1" width="0.9" height="0.9"/><rect x="4.1" y="4.6" width="0.9" height="0.9"/><rect x="31.9" y="29.8" width="0.9" height="0.9"/><rect x="7.6" y="7.8" width="0.9" height="0.9"/><rect x="17.1" y="30.5" width="0.9" height="0.9"/><rect x="33.4" y="30.7" width="0.9" height="0.9"/><rect x="24.3" y="6.0" width="0.9" height="0.9"/><rect x="16.3" y="7.9" width="0.9" height="0.9"/><rect x="21.6" y="23.3" width="0.9" height="0.9"/><rect x="8.3" y="10.3" width="0.9" height="0.9"/><rect x="32.0" y="1.2" width="0.9" height="0.9"/><rect x="32.9" y="36.5" width="0.9" height="0.9"/><rect x="38.9" y="15.7" width="0.9" height="0.9"/></g><rect x="13.5" y="13.5" width="14" height="14" transform="rotate(45 20.5 20.5)" fill="#333"/></g></svg>
<div class="t" style="left:1401.5px;transform:translateX(-50%) scaleX(0.93);top:574px;font-size:12px;color:#e6e6e6;font-weight:400;">Scribbler</div>
<div class="a" style="left:1436px;top:523px;width:62px;height:63.5px;background:#383838;border-radius:2px"></div>
<svg style="left:1446.5px;top:526.5px;" width="41" height="41" viewBox="0 0 41 41"><defs><clipPath id="clSquirm"><rect x="0" y="0" width="41" height="41" rx="8"/></clipPath></defs><g clip-path="url(#clSquirm)"><defs><linearGradient id="sg" x1="0" y1="0" x2="0" y2="1"><stop offset="0" stop-color="#a8f4b0"/><stop offset="1" stop-color="#7cd8c8"/></linearGradient></defs><rect x="0" y="0" width="41" height="41" rx="8" fill="url(#sg)"/><path d="M3 6 Q8 2 12 6 M18 2 Q24 5 22 10 M30 4 Q36 2 38 8 M2 16 Q6 20 4 26 M9 13 Q12 18 10 22 M33 14 Q38 18 34 24 M26 28 Q32 26 36 32 M4 33 Q9 38 14 35 M18 34 Q22 40 28 38 M28 16 Q30 10 36 12 M12 28 Q16 24 14 20" fill="none" stroke="#2e7a62" stroke-width="1.6" stroke-linecap="round"/><rect x="13.5" y="13.5" width="14" height="14" transform="rotate(45 20.5 20.5)" fill="#333"/></g></svg>
<div class="t" style="left:1467px;transform:translateX(-50%) scaleX(0.93);top:574px;font-size:12px;color:#e6e6e6;font-weight:400;">Squirm</div>
<div class="a" style="left:1238px;top:591px;width:62px;height:63.5px;background:#383838;border-radius:2px"></div>
<svg style="left:1248.5px;top:594.5px;" width="41" height="41" viewBox="0 0 41 41"><path d="M6 1 Q20 3 36 1 Q42 6 41 20 Q40 34 41 40 Q22 38 5 41 Q0 30 1 20 Q2 8 6 1Z" fill="#7a48c0" stroke="#c04ad0" stroke-width="1.3"/><path d="M3 14 Q6 11 8 12 Q11 9 14 6 M6 37 Q12 32 16 30 Q22 24 26 20 Q30 16 40 8 M22 40 Q28 34 32 32 Q36 28 40 26" fill="none" stroke="#58a858" stroke-width="2.6"/><rect x="14" y="14" width="13" height="13" transform="rotate(45 20.5 20.5)" fill="#333" stroke="#c04ad0" stroke-width="1"/></svg>
<div class="t" style="left:1269px;transform:translateX(-50%) scaleX(0.93);top:642px;font-size:12px;color:#e6e6e6;font-weight:400;">Vintage</div>
<div class="a" style="left:1304px;top:591px;width:62px;height:63.5px;background:#383838;border-radius:2px"></div>
<svg style="left:1314.5px;top:594.5px;" width="41" height="41" viewBox="0 0 41 41"><defs><clipPath id="clPhoenix"><rect x="0" y="0" width="41" height="41" rx="8"/></clipPath></defs><g clip-path="url(#clPhoenix)"><rect x="0" y="0" width="41" height="41" rx="8" fill="#e8a032"/><path d="M3 12 L12 3 M10 12 L20 3 M22 8 L28 3 M34 10 L40 5 M2 36 L10 28 M8 40 L16 32" stroke="#8a2a0a" stroke-width="2.6" opacity="0.75"/><rect x="13.5" y="13.5" width="14" height="14" transform="rotate(45 20.5 20.5)" fill="#333"/></g></svg>
<div class="t" style="left:1335px;transform:translateX(-50%) scaleX(0.93);top:642px;font-size:12px;color:#e6e6e6;font-weight:400;">Phoenix</div>
<div class="a" style="left:1370.5px;top:591px;width:62px;height:63.5px;background:#383838;border-radius:2px"></div>
<svg style="left:1381.0px;top:594.5px;" width="41" height="41" viewBox="0 0 41 41"><defs><clipPath id="clHalftone"><rect x="0" y="0" width="41" height="41" rx="8"/></clipPath></defs><g clip-path="url(#clHalftone)"><rect x="0" y="0" width="41" height="41" rx="8" fill="#e25a3c"/><g fill="#8a2e30" opacity="0.8"><circle cx="2.0" cy="5.0" r="4.3"/><circle cx="14.5" cy="5.0" r="4.3"/><circle cx="27.0" cy="5.0" r="4.3"/><circle cx="39.5" cy="5.0" r="4.3"/><circle cx="8.2" cy="15.5" r="4.3"/><circle cx="20.7" cy="15.5" r="4.3"/><circle cx="33.2" cy="15.5" r="4.3"/><circle cx="45.7" cy="15.5" r="4.3"/><circle cx="2.0" cy="26.0" r="4.3"/><circle cx="14.5" cy="26.0" r="4.3"/><circle cx="27.0" cy="26.0" r="4.3"/><circle cx="39.5" cy="26.0" r="4.3"/><circle cx="8.2" cy="36.5" r="4.3"/><circle cx="20.7" cy="36.5" r="4.3"/><circle cx="33.2" cy="36.5" r="4.3"/><circle cx="45.7" cy="36.5" r="4.3"/></g><rect x="13.5" y="13.5" width="14" height="14" transform="rotate(45 20.5 20.5)" fill="#333"/></g></svg>
<div class="t" style="left:1401.5px;transform:translateX(-50%) scaleX(0.93);top:642px;font-size:12px;color:#e6e6e6;font-weight:400;">Halftone</div>
<div class="a" style="left:1236px;top:711px;width:264px;height:29px;background:#282828;"></div><div class="a" style="left:1254px;top:713px;width:57px;height:27px;background:#353535;"></div><svg style="left:1243px;top:720px;" width="5" height="10" viewBox="0 0 5 10"><path d="M1 0V10M4 0V10" stroke="#6a6a6a" stroke-width="1"/></svg><div class="t" style="left:1258.8px;transform:scaleX(0.87);transform-origin:left;top:719px;font-size:12px;color:#e6e6e6;font-weight:400;">Transform</div><div class="t" style="left:1315.3px;transform:scaleX(0.91);transform-origin:left;top:719px;font-size:12px;color:#bdbdbd;font-weight:400;">Navigator</div><div class="t" style="left:1372.2px;transform:scaleX(0.9);transform-origin:left;top:719px;font-size:12px;color:#bdbdbd;font-weight:400;">History</div><svg style="left:1482px;top:720px;" width="11" height="10" viewBox="0 0 11 10"><path d="M0 1.2H11M0 5H11M0 8.8H11" stroke="#b8b8b8" stroke-width="2"/></svg>
<div class="t" style="left:1304px;transform:scaleX(0.93);transform-origin:left;top:756px;font-size:12px;color:#7a7a7a;font-weight:400;">X:</div>
<div class="a" style="left:1316px;top:752px;width:63px;height:19px;background:#303030;border-radius:3px"></div>
<div class="t" style="left:1322px;transform:scaleX(0.93);transform-origin:left;top:756px;font-size:12px;color:#9a9a9a;font-weight:400;">0 pt</div>
<div class="t" style="left:1304px;transform:scaleX(0.93);transform-origin:left;top:779px;font-size:12px;color:#7a7a7a;font-weight:400;">Y:</div>
<div class="a" style="left:1316px;top:775px;width:63px;height:19px;background:#303030;border-radius:3px"></div>
<div class="t" style="left:1322px;transform:scaleX(0.93);transform-origin:left;top:779px;font-size:12px;color:#9a9a9a;font-weight:400;">0 pt</div>
<div class="t" style="left:1304px;transform:scaleX(0.93);transform-origin:left;top:809px;font-size:12px;color:#7a7a7a;font-weight:400;">R:</div>
<div class="a" style="left:1316px;top:804.5px;width:63px;height:19px;background:#303030;border-radius:3px"></div>
<div class="t" style="left:1322px;transform:scaleX(0.93);transform-origin:left;top:809px;font-size:12px;color:#9a9a9a;font-weight:400;">0 °</div>
<div class="t" style="left:1391px;transform:scaleX(0.93);transform-origin:left;top:756px;font-size:12px;color:#7a7a7a;font-weight:400;">W:</div>
<div class="a" style="left:1408px;top:752px;width:63px;height:19px;background:#303030;border-radius:3px"></div>
<div class="t" style="left:1414px;transform:scaleX(0.93);transform-origin:left;top:756px;font-size:12px;color:#9a9a9a;font-weight:400;">0 pt</div>
<div class="t" style="left:1392px;transform:scaleX(0.93);transform-origin:left;top:779px;font-size:12px;color:#7a7a7a;font-weight:400;">H:</div>
<div class="a" style="left:1408px;top:775px;width:63px;height:19px;background:#303030;border-radius:3px"></div>
<div class="t" style="left:1414px;transform:scaleX(0.93);transform-origin:left;top:779px;font-size:12px;color:#9a9a9a;font-weight:400;">0 pt</div>
<div class="t" style="left:1391px;transform:scaleX(0.93);transform-origin:left;top:809px;font-size:12px;color:#7a7a7a;font-weight:400;">S:</div>
<div class="a" style="left:1408px;top:804.5px;width:63px;height:19px;background:#303030;border-radius:3px"></div>
<div class="t" style="left:1414px;transform:scaleX(0.93);transform-origin:left;top:809px;font-size:12px;color:#9a9a9a;font-weight:400;">0 °</div>
<svg style="left:1369px;top:811px;" width="8" height="5" viewBox="0 0 8 5"><path d="M0.5 0.5L4 4L7.5 0.5" fill="none" stroke="#9a9a9a" stroke-width="1"/></svg>
<svg style="left:1461px;top:811px;" width="8" height="5" viewBox="0 0 8 5"><path d="M0.5 0.5L4 4L7.5 0.5" fill="none" stroke="#9a9a9a" stroke-width="1"/></svg>
<svg style="left:1482px;top:763px;" width="8" height="20" viewBox="0 0 8 20"><path d="M1 7 V1.5 H7 V7 M1 13 V18.5 H7 V13" fill="none" stroke="#7a7a7a" stroke-width="1"/><path d="M0 10H2M6 10H8" stroke="#7a7a7a" stroke-width="1"/></svg>
<svg style="left:1252px;top:773px;" width="36" height="35" viewBox="0 0 36 35"><path d="M0 0H8V2H13V0H22V2H27V0H36V8H34V13H36V22H34V27H36V35H27V33H22V35H13V33H8V35H0V27H2V22H0V13H2V8H0Z" fill="#6a6a6a"/></svg>
<div class="a" style="left:1427px;top:832px;width:30px;height:25px;background:#3d3d3d;border-radius:3px 0 0 3px"></div>
<div class="a" style="left:1458px;top:832px;width:13.5px;height:25px;background:#3d3d3d;border-radius:0 3px 3px 0"></div>
<svg style="left:1434px;top:837px;" width="16" height="15" viewBox="0 0 16 15"><path d="M4 1H15V12" fill="none" stroke="#6a6a6a" stroke-width="1.2" stroke-dasharray="2.5 1.5"/><rect x="1" y="6" width="9" height="8" rx="2" fill="#6a6a6a"/></svg>
<svg style="left:1461px;top:842px;" width="8" height="5" viewBox="0 0 8 5"><path d="M0.5 0.5L4 4L7.5 0.5" fill="none" stroke="#d0d0d0" stroke-width="1.1"/></svg>
<svg style="left:7px;top:874px;" width="11" height="11" viewBox="0 0 11 11"><path d="M1 0.5V10.5" stroke="#6a6a6a" stroke-width="1.4"/><path d="M10.5 0.5L3 5.5L10.5 10.5Z" fill="#6a6a6a"/></svg>
<svg style="left:26px;top:874px;" width="8" height="11" viewBox="0 0 8 11"><path d="M7.5 0.5L0.5 5.5L7.5 10.5Z" fill="#6a6a6a"/></svg>
<div class="t" style="left:58px;transform:scaleX(0.88);transform-origin:left;top:874px;font-size:12px;color:#d8d8d8;font-weight:400;">1 of 317</div>
<svg style="left:121px;top:874px;" width="9" height="11" viewBox="0 0 9 11"><path d="M0.5 0.5L8.5 5.5L0.5 10.5Z" fill="#e0e0e0"/></svg>
<svg style="left:138px;top:874px;" width="11" height="11" viewBox="0 0 11 11"><path d="M0.5 0.5L8 5.5L0.5 10.5Z" fill="#e0e0e0"/><path d="M10 0.5V10.5" stroke="#e0e0e0" stroke-width="1.4"/></svg>
<svg style="left:156px;top:873px;" width="12" height="14" viewBox="0 0 12 14"><rect x="0.5" y="0.5" width="9" height="11" fill="none" stroke="#8a8a8a" stroke-width="1"/><path d="M2.5 3.5H7.5M2.5 6H7.5M2.5 8.5H7.5" stroke="#8a8a8a" stroke-width="1"/><path d="M11 2.5V13.5H2.5" fill="none" stroke="#8a8a8a" stroke-width="1"/></svg>
<svg style="left:175px;top:875px;" width="14" height="9" viewBox="0 0 14 9"><path d="M1 5 Q7 -1 13 5 Q7 9 3 7" fill="none" stroke="#8a8a8a" stroke-width="1.1"/><circle cx="7" cy="5" r="1.6" fill="#8a8a8a"/><path d="M0 2L2 5L4 3" fill="none" stroke="#8a8a8a" stroke-width="1"/></svg>
<svg style="left:202px;top:873px;" width="13" height="14" viewBox="0 0 13 14"><rect x="0.5" y="0.5" width="10" height="11" fill="none" stroke="#7a7a7a" stroke-width="1"/><path d="M2.5 3.5H8.5M2.5 6H8.5M2.5 8.5H8.5" stroke="#7a7a7a" stroke-width="1"/><path d="M12 2.5V13.5H2.5" fill="none" stroke="#7a7a7a" stroke-width="1"/></svg>
<div class="t" style="left:233px;top:874px;font-size:12px;color:#cfcfcf;transform:scaleX(0.967);transform-origin:left"><b style="color:#fff">Drag</b> to marquee select. <b style="color:#fff">Click</b> an object to select it.</div>
<svg style="left:20px;top:904px;" width="23" height="23" viewBox="0 0 23 23"><defs><linearGradient id="wg" x1="0" y1="0" x2="1" y2="1"><stop offset="0" stop-color="#6dd3ff"/><stop offset="1" stop-color="#1a8fe6"/></linearGradient></defs><rect x="0" y="0" width="10.7" height="10.7" fill="url(#wg)"/><rect x="11.9" y="0" width="10.7" height="10.7" fill="url(#wg)"/><rect x="0" y="11.9" width="10.7" height="10.7" fill="url(#wg)"/><rect x="11.9" y="11.9" width="10.7" height="10.7" fill="url(#wg)"/></svg>
<div class="a" style="left:57px;top:900px;width:212px;height:29px;background:#f2f2f2;border-radius:14.5px"></div>
<svg style="left:67px;top:909px;" width="15" height="14" viewBox="0 0 15 14"><circle cx="6" cy="6" r="4.9" fill="none" stroke="#222" stroke-width="1.6"/><path d="M9.6 9.6L14 13.6" stroke="#222" stroke-width="1.7"/></svg>
<div class="t" style="left:92px;transform:scaleX(0.88);transform-origin:left;top:908px;font-size:14px;color:#5c5c5c;font-weight:400;">Search</div>
<svg style="left:223px;top:906px;" width="36" height="17" viewBox="0 0 36 17"><defs><linearGradient id="cg" x1="0" y1="0" x2="0" y2="1"><stop offset="0" stop-color="#c8e4fa"/><stop offset="1" stop-color="#6aa8e0"/></linearGradient></defs><path d="M3 16 Q-1 16 1 11 Q3 8 7 9 Q9 3 15 4 Q20 4 21 8 Q23 4 28 5 Q33 6 32 10 Q36 11 35 14 Q34 16 31 16Z" fill="url(#cg)"/></svg>
<svg style="left:282px;top:904px;" width="25" height="22" viewBox="0 0 25 22"><defs><linearGradient id="cp" x1="0" y1="0" x2="1" y2="1"><stop offset="0" stop-color="#2fb5f5"/><stop offset="0.5" stop-color="#7a5cf0"/><stop offset="1" stop-color="#f05ab0"/></linearGradient></defs><path d="M6 1 H15 Q18 1 19 4 L23 15 Q24 19 20 19 H9 Q6 19 5 16 L1 5 Q0 1 4 1Z" fill="url(#cp)"/><path d="M4 12 Q2 6 8 6 H12 L9 16 Q8 19 5 17Z" fill="#3ac070" opacity="0.8"/><rect x="8" y="14" width="15" height="8" rx="2" fill="#f5c518"/><text x="15.5" y="21" text-anchor="middle" font-size="6.5" font-weight="bold" fill="#222" font-family="Liberation Sans">PRE</text></svg>
<svg style="left:325px;top:904px;" width="24" height="21" viewBox="0 0 24 21"><rect x="0.5" y="7" width="17" height="14" rx="1.5" fill="#5a5a5a"/><rect x="6.5" y="0.5" width="17" height="14" rx="1.5" fill="#f0f0f0"/><rect x="6.5" y="7" width="11" height="7.5" fill="#b8b8b8"/></svg>
<svg style="left:367px;top:905px;" width="28" height="21" viewBox="0 0 28 21"><defs><linearGradient id="wc" x1="0" y1="0" x2="0" y2="1"><stop offset="0" stop-color="#dfeefc"/><stop offset="1" stop-color="#8fb8e8"/></linearGradient></defs><path d="M4 20 Q0 20 0.5 16 Q1 12 5 12.5 Q6 7 12 7 Q17 7 18.5 11 Q25 10.5 25 16 Q25 20 21 20Z" fill="url(#wc)"/><circle cx="19.6" cy="1" r="7.3" fill="#d03a2a"/><text x="19.6" y="4.5" text-anchor="middle" font-size="10" fill="#fff" font-family="Liberation Sans">1</text></svg>
<svg style="left:411px;top:904px;" width="25" height="22" viewBox="0 0 25 22"><path d="M0 3 Q0 1 2 1 H9 L11 3 H23 Q25 3 25 5 V19 Q25 21 23 21 H2 Q0 21 0 19Z" fill="#e8b82e"/><path d="M0 6 H25 V19 Q25 21 23 21 H2 Q0 21 0 19Z" fill="#fcd54a"/><rect x="6" y="13" width="13" height="8" rx="1.5" fill="#2a7ad0"/></svg>
<svg style="left:454px;top:903px;" width="24" height="24" viewBox="0 0 24 24"><defs><linearGradient id="eg1" x1="0" y1="0" x2="1" y2="1"><stop offset="0" stop-color="#3fd1a0"/><stop offset="1" stop-color="#1a80d8"/></linearGradient></defs><circle cx="12" cy="12" r="11.8" fill="url(#eg1)"/><path d="M3 15 Q3 6 12 6 Q19 6 20 12 Q20 15 16 15 H9 Q10 19 15 19 Q18 19 21 17 Q18 24 10 23 Q3 21 3 15Z" fill="#0c59a4"/><path d="M9 12 H15 Q15 9 12 9 Q9 9 9 12Z" fill="#3fd1a0"/></svg>
<div class="a" style="left:463px;top:930px;width:7px;height:2.5px;background:#8a8a8a;border-radius:1.2px"></div>
<svg style="left:497px;top:903px;" width="30" height="24" viewBox="0 0 30 24"><circle cx="12" cy="12" r="11.8" fill="#db4437"/><path d="M12 12 L1.8 6 A11.8 11.8 0 0 0 12 23.8Z" fill="#0f9d58"/><path d="M12 12 L12 23.8 A11.8 11.8 0 0 0 22.2 6Z" fill="#f4b400"/><circle cx="12" cy="12" r="5.6" fill="#fff"/><circle cx="12" cy="12" r="4.4" fill="#4285f4"/><circle cx="22" cy="3" r="7.7" fill="#3a2a2a"/><path d="M14.5 4 Q22 1 29.5 4 V6 Q22 4 14.5 6Z" fill="#e08050" opacity="0.7"/></svg>
<div class="a" style="left:506px;top:930px;width:6px;height:2.5px;background:#8a8a8a;border-radius:1.2px"></div>
<svg style="left:540px;top:903px;" width="24" height="24" viewBox="0 0 24 24"><rect x="0" y="0" width="23.5" height="23.5" rx="2.5" fill="#6a3fa8"/><rect x="1.5" y="1.5" width="20.5" height="20.5" rx="1.5" fill="#e27ef0"/><polygon points="1.5,1.5 9,1.5 1.5,14" fill="#8f5cc8"/><path d="M9 2 L15 13 M21 2 L14.5 13.5 M21.5 14 L9 14 M15 22 L8 10 M2 22 L9 10 M2 10 L15 10" fill="none" stroke="#6a3fa8" stroke-width="1.1"/></svg>
<div class="a" style="left:575px;top:895px;width:39px;height:39px;background:#2d2d2d;border-radius:4px"></div>
<svg style="left:583px;top:903px;" width="24" height="24" viewBox="0 0 24 24"><rect x="0" y="0" width="23.5" height="23.5" rx="2.5" fill="#8c1a23"/><polygon points="10,1.8 21.7,1.8 21.7,21.7 1.8,21.7 1.8,15" fill="#fb9850"/><g stroke="#8c1a23" stroke-width="1.1"><line x1="4.3" y1="10" x2="10" y2="21.8"/><line x1="6.6" y1="6.3" x2="14.3" y2="21.8"/><line x1="9" y1="2.7" x2="18.3" y2="21.8"/><line x1="12" y1="1" x2="21.8" y2="18.5"/></g></svg>
<div class="a" style="left:587px;top:930px;width:16px;height:3px;background:#9aa4ae;border-radius:1.5px"></div>
<svg style="left:626px;top:903px;" width="24" height="24" viewBox="0 0 24 24"><rect x="0" y="0" width="23.5" height="23.5" rx="2.5" fill="#1e4f8a"/><rect x="1.5" y="1.5" width="20.5" height="20.5" rx="1.5" fill="#48b8f0"/><polygon points="1.5,1.5 10,1.5 1.5,15" fill="#2a70b8"/><path d="M10,2 L2.5,14.5 L8,22 M6.5,14.5 L22,14.5 M6.5,14.5 L11,8" fill="none" stroke="#1e4f8a" stroke-width="1.2"/></svg>
<svg style="left:669px;top:903px;" width="24" height="24" viewBox="0 0 24 24"><rect x="0" y="0" width="24" height="24" rx="1" fill="#5a7888"/><rect x="1.5" y="1.5" width="21" height="21" fill="#f5b82e"/><circle cx="10" cy="11" r="6" fill="none" stroke="#fff" stroke-width="2.5"/><circle cx="10" cy="11" r="2" fill="#fff"/><rect x="11.5" y="12" width="11" height="10.5" fill="#5a7888"/><rect x="13.5" y="14" width="7" height="6.5" fill="#fff"/><path d="M13.5 20.5 L20.5 14" stroke="#5a7888" stroke-width="1.2"/></svg>
<svg style="left:712px;top:906px;" width="23" height="17" viewBox="0 0 23 17"><rect x="0" y="0" width="23" height="16.5" rx="1" fill="#e8e8e8"/><path d="M0.5 0.5 L11.5 9 L22.5 0.5" fill="none" stroke="#b0b0b0" stroke-width="1"/></svg>
<div class="a" style="left:721px;top:930px;width:6px;height:2.5px;background:#8a8a8a;border-radius:1.2px"></div>
<svg style="left:755px;top:903px;" width="24" height="24" viewBox="0 0 24 24"><circle cx="12" cy="12" r="11.8" fill="#5865f2"/><path d="M6 8 Q9 6 10.5 6.5 L11 7.5 Q12 7.3 13 7.5 L13.5 6.5 Q15 6 18 8 Q19.5 11 19 15.5 Q17 17 15 17.3 L14 15.8 Q12 16.3 10 15.8 L9 17.3 Q7 17 5 15.5 Q4.5 11 6 8Z" fill="#fff"/><circle cx="9.6" cy="12.3" r="1.4" fill="#5865f2"/><circle cx="14.4" cy="12.3" r="1.4" fill="#5865f2"/></svg>
<svg style="left:799px;top:903px;" width="22" height="24" viewBox="0 0 22 24"><path d="M0 3 L6.5 0.5 L11 5 L15.5 0.5 L22 3 V18 L11 23.5 L0 18Z" fill="#c8282a"/><path d="M4 6 L11 11.5 L18 6 V16.5 L11 20 L4 16.5Z" fill="#1f1f1f"/></svg>
<svg style="left:841px;top:903px;" width="24" height="24" viewBox="0 0 24 24"><defs><linearGradient id="pg1" x1="0" y1="0" x2="0" y2="1"><stop offset="0" stop-color="#2a2a90"/><stop offset="1" stop-color="#1a1a60"/></linearGradient></defs><rect x="0" y="0" width="23.5" height="23.5" rx="4" fill="url(#pg1)"/><path d="M5 6 H19 L17.5 10 L12 20 L6.5 10Z" fill="#a8a8ff"/><path d="M5 6 H19 L17.5 10 H6.5Z" fill="#c8c8ff"/></svg>
<svg style="left:884px;top:903px;" width="24" height="24" viewBox="0 0 24 24"><path d="M4 1 H20 Q23 1 23 4 V12 Q23 20 12 23.5 Q1 20 1 12 V4 Q1 1 4 1Z" fill="#3a1a08" stroke="#f07a18" stroke-width="1.8"/><text x="12" y="17" text-anchor="middle" font-size="13" font-weight="bold" fill="#f58a28" font-family="Liberation Sans">G</text></svg>
<svg style="left:1216px;top:911px;" width="11" height="7" viewBox="0 0 11 7"><path d="M0.5 6.5L5.5 1L10.5 6.5" fill="none" stroke="#e0e0e0" stroke-width="1.3"/></svg>
<svg style="left:1244px;top:909px;" width="17" height="11" viewBox="0 0 17 11"><path d="M2.5 10.5 Q0 10.5 0.3 8 Q0.8 5.5 3.5 6 Q4.5 2 8.5 2 Q12 2 13 5 Q16.5 5 16.5 8 Q16.5 10.5 14 10.5Z" fill="#d8d8d8"/><path d="M4 6 Q5 1 9 1 Q12 1 13 4" fill="#a8a8a8"/></svg>
<div class="t" style="left:1289px;transform:translateX(-50%) scaleX(0.92);top:902px;font-size:12px;color:#e8e8e8;font-weight:400;">ENG</div>
<div class="t" style="left:1289px;transform:translateX(-50%) scaleX(0.92);top:917px;font-size:12px;color:#e8e8e8;font-weight:400;">UK</div>
<svg style="left:1319px;top:909px;" width="16" height="12" viewBox="0 0 16 12"><path d="M1 4 Q8 -2 15 4" fill="none" stroke="#7a7a7a" stroke-width="1.3"/><path d="M3.5 6.5 Q8 2.5 12.5 6.5" fill="none" stroke="#e0e0e0" stroke-width="1.3"/><path d="M6 9 Q8 7.3 10 9" fill="none" stroke="#e0e0e0" stroke-width="1.3"/><circle cx="8" cy="11" r="1.1" fill="#e0e0e0"/></svg>
<svg style="left:1342px;top:909px;" width="17" height="12" viewBox="0 0 17 12"><path d="M1 4 H4 L8 0.8 V11.2 L4 8 H1Z" fill="none" stroke="#e0e0e0" stroke-width="1.1"/><path d="M10.5 3.5 Q12 6 10.5 8.5 M12.5 2 Q15 6 12.5 10" fill="none" stroke="#e0e0e0" stroke-width="1.1"/><path d="M14.5 0.5 Q18 6 14.5 11.5" fill="none" stroke="#777" stroke-width="1"/></svg>
<svg style="left:1365px;top:910px;" width="17" height="10" viewBox="0 0 17 10"><rect x="0.6" y="0.6" width="13.5" height="8.8" rx="2" fill="none" stroke="#e0e0e0" stroke-width="1.2"/><rect x="2.3" y="2.3" width="5.5" height="5.4" fill="#e0e0e0"/><rect x="14.6" y="3" width="1.8" height="4" fill="#e0e0e0"/></svg>
<div class="t" style="right:42px;transform:scaleX(0.93);transform-origin:right;top:901px;font-size:12px;color:#e8e8e8;font-weight:400;">14:26</div>
<div class="t" style="right:42px;transform:scaleX(1.0);transform-origin:right;top:917px;font-size:12px;color:#e8e8e8;font-weight:400;">27/01/2024</div>
<svg style="left:1466px;top:908px;" width="15" height="15" viewBox="0 0 15 15"><path d="M2 11 Q3 10 3 8 V6 Q3 2 7.5 2 Q12 2 12 6 V8 Q12 10 13 11Z" fill="#e0e0e0"/><path d="M5.5 12.5 Q7.5 14.5 9.5 12.5" fill="none" stroke="#e0e0e0" stroke-width="1.2"/><path d="M5 5H8L5 8.5H8" fill="none" stroke="#333" stroke-width="1"/><path d="M10 0.5H13L10 4H13" fill="none" stroke="#e0e0e0" stroke-width="0.9"/></svg>
</body></html>
